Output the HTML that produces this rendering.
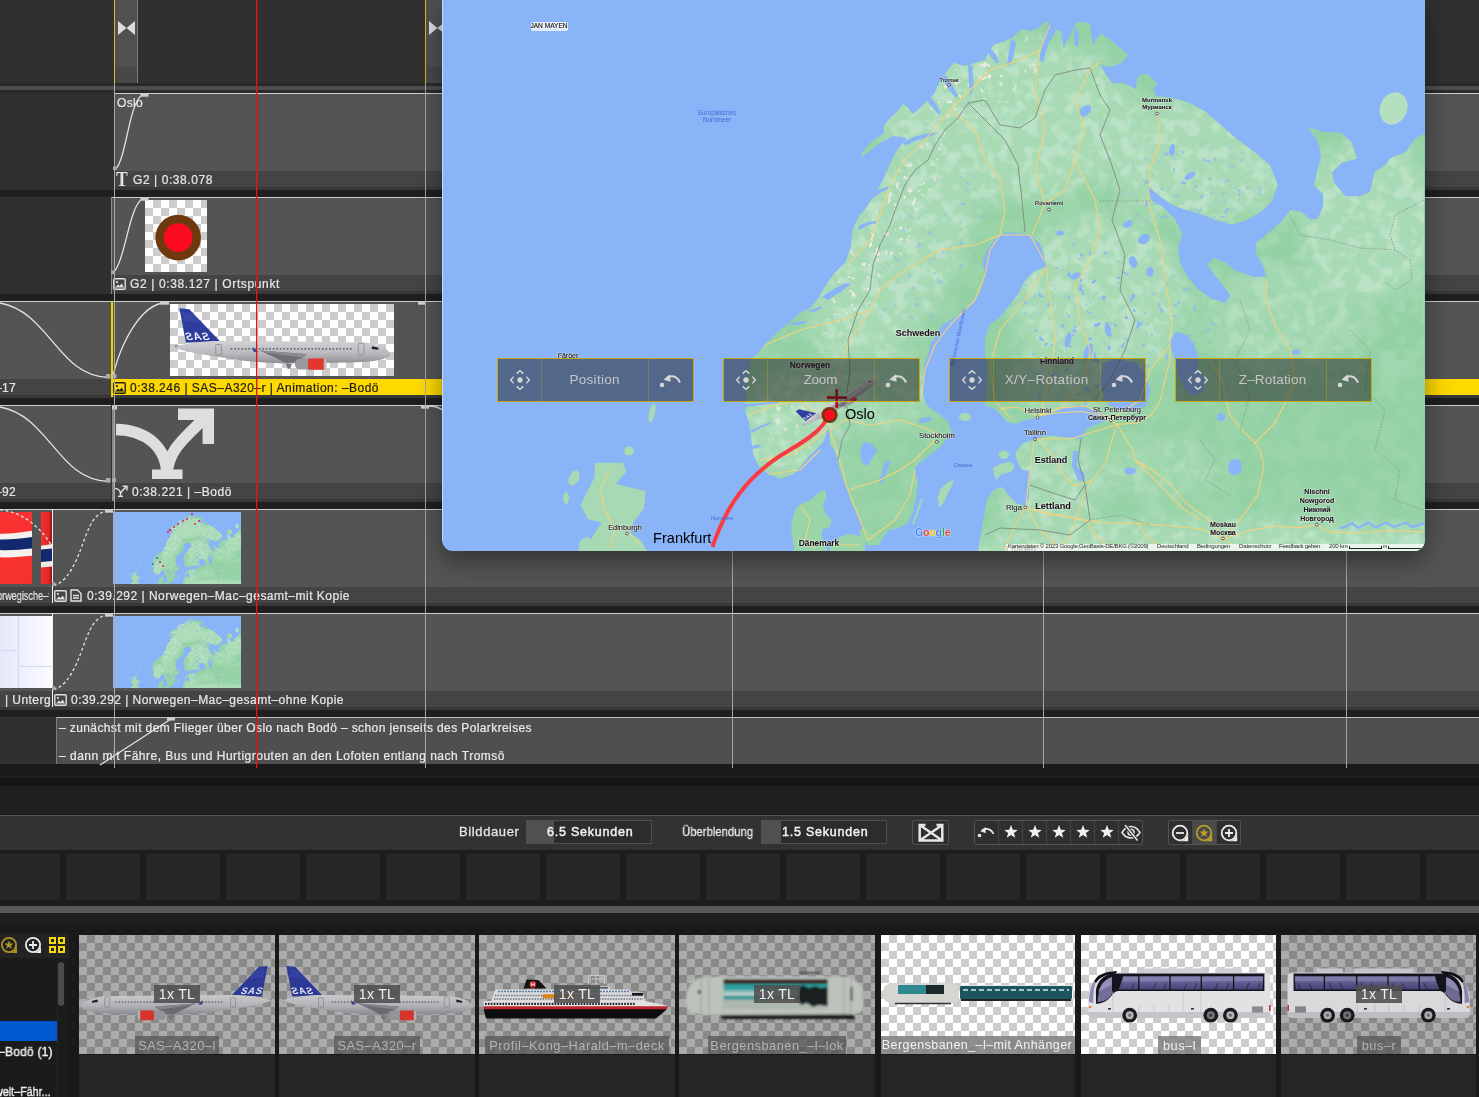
<!DOCTYPE html>
<html><head><meta charset="utf-8">
<style>
*{box-sizing:border-box;margin:0;padding:0}
html,body{width:1479px;height:1097px;overflow:hidden;background:#303030;font-family:"Liberation Sans",sans-serif;}
#root{position:absolute;left:0;top:0;width:1479px;height:1097px;overflow:hidden;background:#303030}
.abs{position:absolute}
.clip{position:absolute;background:#545454;border-top:1px solid #c8c8c8}
.lab{position:absolute;background:#444;height:17px}
.gapd{position:absolute;left:0;width:1479px;background:#232323}
.txt{position:absolute;color:#e4e4e4;font-size:12px;white-space:nowrap;letter-spacing:0.55px;line-height:14px;-webkit-text-stroke:.22px currentColor;will-change:transform}
.vline{position:absolute;top:0;width:1px;height:768px;background:#a4a4a4}
.chk{background-color:#fff;background-image:linear-gradient(45deg,#ccc 25%,transparent 25%,transparent 75%,#ccc 75%),linear-gradient(45deg,#ccc 25%,transparent 25%,transparent 75%,#ccc 75%);background-size:16px 16px;background-position:0 0,8px 8px}
.chkd{background-color:#b4b4b4;background-image:linear-gradient(45deg,#8f8f8f 25%,transparent 25%,transparent 75%,#8f8f8f 75%),linear-gradient(45deg,#8f8f8f 25%,transparent 25%,transparent 75%,#8f8f8f 75%);background-size:16px 16px;background-position:0 0,8px 8px}
#root div:not(:empty){will-change:transform}
</style></head><body><div id="root">
<!-- top ruler row -->
<div class="abs" style="left:0;top:0;width:1479px;height:84px;background:#303030"></div>
<div class="abs" style="left:114px;top:0;width:24px;height:83px;background:#505050;border-right:1px solid #7a7a7a"></div>
<div class="abs" style="left:114px;top:67px;width:23px;height:16px;background:#484848"></div>
<div class="abs" style="left:114px;top:0;width:1px;height:83px;background:#d8b92a"></div>
<div class="abs" style="left:425px;top:0;width:1px;height:83px;background:#d8b92a"></div>
<div class="abs" style="left:426px;top:0;width:16px;height:83px;background:#505050"></div>
<div class="abs" style="left:426px;top:67px;width:16px;height:16px;background:#484848"></div>
<svg class="abs" style="left:118px;top:21px" width="17" height="14" viewBox="0 0 17 14"><path d="M0 0 L8.5 7 L0 14 Z M17 0 L8.5 7 L17 14 Z" fill="#dcdcdc"/></svg>
<svg class="abs" style="left:429px;top:21px" width="17" height="14" viewBox="0 0 17 14"><path d="M0 0 L8.5 7 L0 14 Z M17 0 L8.5 7 L17 14 Z" fill="#dcdcdc"/></svg>
<div class="abs" style="left:0;top:83px;width:1479px;height:3px;background:#2a2a2a"></div>
<div class="abs" style="left:0;top:86px;width:1479px;height:4px;background:#4e4e4e"></div>
<div class="abs" style="left:0;top:90px;width:1479px;height:3px;background:#2a2a2a"></div>

<div class="abs" style="left:114px;top:93px;width:1365px;height:78px;background:#545454;border-top:1px solid #cfcfcf;"></div>
<div class="abs" style="left:114px;top:171px;width:1365px;height:16px;background:#444;"></div>
<div class="abs" style="left:114px;top:187px;width:1365px;height:3px;background:#383838;"></div>
<div class="abs" style="left:0px;top:190px;width:1479px;height:7px;background:#1f1f1f;"></div>
<div class="abs" style="left:111px;top:197px;width:1368px;height:78px;background:#545454;border-top:1px solid #cfcfcf;"></div>
<div class="abs" style="left:111px;top:275px;width:1368px;height:16px;background:#444;"></div>
<div class="abs" style="left:111px;top:291px;width:1368px;height:3px;background:#383838;"></div>
<div class="abs" style="left:0px;top:294px;width:1479px;height:7px;background:#1f1f1f;"></div>
<div class="abs" style="left:0px;top:301px;width:111px;height:78px;background:#545454;border-top:1px solid #cfcfcf;"></div>
<div class="abs" style="left:0px;top:379px;width:111px;height:16px;background:#444;"></div>
<div class="abs" style="left:0px;top:395px;width:111px;height:3px;background:#383838;"></div>
<div class="abs" style="left:111px;top:301px;width:1368px;height:78px;background:#545454;border-top:1px solid #cfcfcf;"></div>
<div class="abs" style="left:111px;top:379px;width:1368px;height:16px;background:#fdd900;"></div>
<div class="abs" style="left:111px;top:395px;width:1368px;height:3px;background:#383838;"></div>
<div class="abs" style="left:0px;top:398px;width:1479px;height:7px;background:#1f1f1f;"></div>
<div class="abs" style="left:0px;top:405px;width:111px;height:78px;background:#545454;border-top:1px solid #cfcfcf;"></div>
<div class="abs" style="left:0px;top:483px;width:111px;height:16px;background:#444;"></div>
<div class="abs" style="left:0px;top:499px;width:111px;height:3px;background:#383838;"></div>
<div class="abs" style="left:112px;top:405px;width:1367px;height:78px;background:#545454;border-top:1px solid #cfcfcf;"></div>
<div class="abs" style="left:112px;top:483px;width:1367px;height:16px;background:#444;"></div>
<div class="abs" style="left:112px;top:499px;width:1367px;height:3px;background:#383838;"></div>
<div class="abs" style="left:0px;top:502px;width:1479px;height:7px;background:#1f1f1f;"></div>
<div class="abs" style="left:0px;top:509px;width:52px;height:78px;background:#545454;border-top:1px solid #cfcfcf;"></div>
<div class="abs" style="left:0px;top:587px;width:52px;height:16px;background:#444;"></div>
<div class="abs" style="left:0px;top:603px;width:52px;height:3px;background:#383838;"></div>
<div class="abs" style="left:52px;top:509px;width:1427px;height:78px;background:#545454;border-top:1px solid #cfcfcf;"></div>
<div class="abs" style="left:52px;top:587px;width:1427px;height:16px;background:#444;"></div>
<div class="abs" style="left:52px;top:603px;width:1427px;height:3px;background:#383838;"></div>
<div class="abs" style="left:0px;top:606px;width:1479px;height:7px;background:#1f1f1f;"></div>
<div class="abs" style="left:0px;top:613px;width:52px;height:78px;background:#545454;border-top:1px solid #cfcfcf;"></div>
<div class="abs" style="left:0px;top:691px;width:52px;height:16px;background:#444;"></div>
<div class="abs" style="left:0px;top:707px;width:52px;height:3px;background:#383838;"></div>
<div class="abs" style="left:52px;top:613px;width:1427px;height:78px;background:#545454;border-top:1px solid #cfcfcf;"></div>
<div class="abs" style="left:52px;top:691px;width:1427px;height:16px;background:#444;"></div>
<div class="abs" style="left:52px;top:707px;width:1427px;height:3px;background:#383838;"></div>
<div class="abs" style="left:0px;top:710px;width:1479px;height:7px;background:#1f1f1f;"></div>
<div class="abs" style="left:56px;top:717px;width:1423px;height:47px;background:#4f4f4f;border-left:1px solid #7d7d7d;border-top:1px solid #bdbdbd;"></div>
<div class="abs" style="left:0px;top:764px;width:1479px;height:11.5px;background:#1a1a1a;"></div>
<div class="abs" style="left:0px;top:775.5px;width:1479px;height:2.5px;background:#1f1f1f;"></div>
<div class="abs" style="left:0px;top:778px;width:1479px;height:7.5px;background:#151515;"></div>
<div class="abs" style="left:0px;top:785.5px;width:1479px;height:29.5px;background:#1f1f1f;"></div>
<div class="abs" style="left:111px;top:197px;width:1px;height:97px;background:#8a8a8a;"></div>
<div class="abs" style="left:111px;top:301px;width:2px;height:96px;background:#f2d000;"></div>
<div class="abs" style="left:112px;top:405px;width:2px;height:96px;background:#8a8a8a;"></div>
<div class="abs" style="left:52px;top:509px;width:1px;height:94px;background:#f4f4f4;"></div>
<div class="abs" style="left:52px;top:613px;width:1px;height:94px;background:#f4f4f4;"></div>
<div class="abs chk" style="left:145px;top:200px;width:62px;height:72px"></div>
<svg class="abs" style="left:145px;top:200px" width="62" height="72" viewBox="145 200 62 72"><circle cx="178.2" cy="237.6" r="22.8" fill="#70390d"/><circle cx="178.2" cy="237.6" r="14.3" fill="#fb0a20"/></svg>
<div class="abs chk" style="left:170px;top:304px;width:224px;height:72px;overflow:hidden"><svg class="abs" style="left:1px;top:-31px;transform:scaleX(-1)" width="222" height="135"><use href="#plane"/></svg></div>
<svg class="abs" style="left:112px;top:405px" width="110" height="80" viewBox="112 405 110 80"><g fill="none" stroke="#dedede" stroke-width="11.5"><path d="M116 429.5 C146 430 167 447 167 476"/><path d="M167 476 C167 452 182 440 206 417"/><path d="M178 414.3 H208.3 V444" stroke-linejoin="miter"/></g><rect x="152" y="469.5" width="30.5" height="9.5" fill="#dedede"/></svg>
<svg class="abs" style="left:0;top:512px" width="32" height="72" viewBox="0 0 32 72"><defs><linearGradient id="flg" x1="0" y1="0" x2="1" y2="1"><stop offset="0" stop-color="#fb3231"/><stop offset="1" stop-color="#f33230"/></linearGradient></defs><rect width="32" height="72" fill="url(#flg)"/><path d="M0 21.7 C10 22 22 20.5 32 18.8 L32 43.7 C22 44.5 10 46 0 45.2Z" fill="#f6f1ec"/><path d="M0 27.4 C10 27.6 22 26.5 32 25 L32 36.5 C22 37.5 10 38.6 0 38Z" fill="#112a6e"/></svg>
<svg class="abs" style="left:41px;top:512px" width="11" height="72" viewBox="0 0 11 72"><defs><linearGradient id="flg2" x1="0" y1="0" x2="1" y2="0"><stop offset="0" stop-color="#f33030"/><stop offset=".7" stop-color="#e02828"/><stop offset="1" stop-color="#8e1417"/></linearGradient></defs><rect width="11" height="72" fill="url(#flg2)"/><path d="M0 33.7 L11 32 V54.5 L0 55.5Z" fill="#f1ebe6"/><path d="M0 37.5 L11 36.5 V49 L0 50Z" fill="#112a6e"/></svg>
<div class="abs" style="left:0;top:616px;width:52px;height:72px;background:linear-gradient(90deg,#e4e8fa,#fbfbff)"></div>
<div class="abs" style="left:18px;top:616px;width:1px;height:72px;background:#d5d9ef;"></div>
<div class="abs" style="left:0px;top:650px;width:18px;height:1px;background:#d5d9ef;"></div>
<div class="abs" style="left:18px;top:666px;width:34px;height:1px;background:#d5d9ef;"></div>
<svg class="abs" style="left:113px;top:512px;background:#8ab4f8" width="128" height="72" viewBox="442 0 982 550" preserveAspectRatio="none"><use href="#landall"/></svg>
<svg class="abs" style="left:113px;top:616px;background:#8ab4f8" width="128" height="72" viewBox="442 0 982 550" preserveAspectRatio="none"><use href="#landall"/></svg>
<svg class="abs" style="left:113px;top:512px" width="128" height="72" viewBox="113 512 128 72"><g fill="#d8204a"><circle cx="192" cy="514" r="1"/><circle cx="187" cy="519" r="1"/><circle cx="183" cy="521" r="1"/><circle cx="178" cy="524" r="1"/><circle cx="174" cy="527" r="1"/><circle cx="170" cy="530" r="1.2"/><circle cx="168" cy="532" r="1"/><circle cx="195" cy="524" r="1"/><circle cx="199" cy="521" r="1"/><circle cx="163" cy="566" r="1"/><circle cx="160" cy="562" r="1"/></g><g fill="#2b7fb8"><circle cx="157" cy="558" r="1"/><circle cx="153" cy="564" r="1"/></g></svg>
<svg class="abs" style="left:0;top:90px;width:450px;height:680px" viewBox="0 90 450 680"><path d="M115.5 169 C126 160 129 104 141.5 95.5" fill="none" stroke="#e2e2e2" stroke-width="1.3"/><path d="M113 273 C125 262 129 208 141.5 199.5" fill="none" stroke="#e2e2e2" stroke-width="1.3"/><path d="M0 303 C50 312 58 377 109 377.5" fill="none" stroke="#e2e2e2" stroke-width="1.3"/><path d="M0 407 C50 416 58 481 109 481.5" fill="none" stroke="#e2e2e2" stroke-width="1.3"/><path d="M112.5 378 C120 345 140 304 166 302.5" fill="none" stroke="#e2e2e2" stroke-width="1.3"/><path d="M429 406 C436 406 440 408 444 411" fill="none" stroke="#e2e2e2" stroke-width="1.3"/><path d="M0 509.8 C22 512 40 526 52.5 547" fill="none" stroke="#e2e2e2" stroke-width="1.3" stroke-dasharray="3 2.5"/><path d="M53.6 585.4 C63 583 70 574 76.6 559.5 C83 545 88 526 95 518 C100 513 104 511 108 510" fill="none" stroke="#e2e2e2" stroke-width="1.3" stroke-dasharray="3 2.5"/><path d="M53.6 689.4 C63 687 70 678 76.6 663.5 C83 649 88 630 95 622 C100 617 104 615 108 614" fill="none" stroke="#e2e2e2" stroke-width="1.3" stroke-dasharray="3 2.5"/><path d="M100 765 L171 719" fill="none" stroke="#e2e2e2" stroke-width="1.3" stroke-width="1.6"/><g fill="#cfcfcf"><rect x="140.5" y="93.5" width="8" height="3.2"/><rect x="140.5" y="197.5" width="8" height="3.2"/><rect x="160" y="301.5" width="9" height="3.2"/><rect x="418" y="301.5" width="8" height="3.2"/><rect x="421" y="405.5" width="8" height="3.2"/><rect x="112" y="405.5" width="5" height="4"/><rect x="105" y="509.5" width="8" height="3.2"/><rect x="105" y="613.5" width="8" height="3.2"/><rect x="167" y="717.3" width="8" height="3.2"/><rect x="106" y="374" width="4.5" height="4.5" fill="#aaa"/><rect x="106" y="478" width="4.5" height="4.5" fill="#aaa"/><rect x="113" y="166.5" width="3.5" height="3.5" fill="#aaa"/><rect x="111" y="270.5" width="3.5" height="3.5" fill="#aaa"/><rect x="112.5" y="374" width="4" height="4" fill="#aaa"/><rect x="112" y="478" width="4" height="4" fill="#aaa"/><rect x="52" y="582.5" width="3.5" height="3.5" fill="#aaa"/><rect x="52" y="686.5" width="3.5" height="3.5" fill="#aaa"/></g></svg>
<svg class="abs" style="left:113px;top:277.5px" width="13" height="12" viewBox="0 0 13 12"><rect x=".8" y=".8" width="11.4" height="10.4" rx="1" fill="none" stroke="#e0e0e0" stroke-width="1.4"/><circle cx="4" cy="4" r="1.1" fill="#e0e0e0"/><path d="M2 9.5 L5 6.5 L6.7 8 L8.7 5.6 L11 9.5Z" fill="#e0e0e0"/></svg>
<svg class="abs" style="left:113px;top:381.5px" width="13" height="12" viewBox="0 0 13 12"><rect x=".8" y=".8" width="11.4" height="10.4" rx="1" fill="none" stroke="#222" stroke-width="1.4"/><circle cx="4" cy="4" r="1.1" fill="#222"/><path d="M2 9.5 L5 6.5 L6.7 8 L8.7 5.6 L11 9.5Z" fill="#222"/></svg>
<svg class="abs" style="left:54px;top:589.5px" width="13" height="12" viewBox="0 0 13 12"><rect x=".8" y=".8" width="11.4" height="10.4" rx="1" fill="none" stroke="#e0e0e0" stroke-width="1.4"/><circle cx="4" cy="4" r="1.1" fill="#e0e0e0"/><path d="M2 9.5 L5 6.5 L6.7 8 L8.7 5.6 L11 9.5Z" fill="#e0e0e0"/></svg>
<svg class="abs" style="left:54px;top:693.5px" width="13" height="12" viewBox="0 0 13 12"><rect x=".8" y=".8" width="11.4" height="10.4" rx="1" fill="none" stroke="#e0e0e0" stroke-width="1.4"/><circle cx="4" cy="4" r="1.1" fill="#e0e0e0"/><path d="M2 9.5 L5 6.5 L6.7 8 L8.7 5.6 L11 9.5Z" fill="#e0e0e0"/></svg>
<svg class="abs" style="left:70px;top:589px" width="12" height="13" viewBox="0 0 12 13"><path d="M1 1 H7.5 L11 4.5 V12 H1Z" fill="none" stroke="#e0e0e0" stroke-width="1.4"/><path d="M3 6.5 H9 M3 9 H9" stroke="#e0e0e0" stroke-width="1.3"/></svg>
<div class="abs" style="left:116px;top:169px;font-family:'Liberation Serif',serif;font-size:20px;font-weight:bold;line-height:20px;color:#e6e6e6;transform:scaleX(.88);transform-origin:0 0">T</div>
<svg class="abs" style="left:114px;top:485px" width="15" height="13" viewBox="0 0 15 13"><g fill="none" stroke="#e0e0e0" stroke-width="1.4"><path d="M1 3.5 C4 3.5 6.5 5.5 6.5 9"/><path d="M6.5 12 V9 C6.5 6.5 9 5 12.5 1.8"/><path d="M8.6 1.3 H13 V5.6"/></g><path d="M4 11.3 H9" stroke="#e0e0e0" stroke-width="1.4"/></svg>
<div class="txt" style="left:117px;top:96px;color:#e6e6e6;font-size:12px;font-weight:normal;letter-spacing:0.328px">Oslo</div>
<div class="txt" style="left:133px;top:173px;color:#e6e6e6;font-size:12px;font-weight:normal;letter-spacing:0.576px">G2 | 0:38.078</div>
<div class="txt" style="left:130px;top:277px;color:#e6e6e6;font-size:12px;font-weight:normal;letter-spacing:0.627px">G2 | 0:38.127 | Ortspunkt</div>
<div class="txt" style="left:130px;top:381px;color:#1c1c1c;font-size:12px;font-weight:normal;letter-spacing:0.482px">0:38.246 | SAS–A320–r | Animation: –Bodö</div>
<div class="txt" style="left:132px;top:485px;color:#e6e6e6;font-size:12px;font-weight:normal;letter-spacing:0.550px">0:38.221 | –Bodö</div>
<div class="txt" style="left:87px;top:589px;color:#e6e6e6;font-size:12px;font-weight:normal;letter-spacing:0.493px">0:39.292 | Norwegen–Mac–gesamt–mit Kopie</div>
<div class="txt" style="left:71px;top:693px;color:#e6e6e6;font-size:12px;font-weight:normal;letter-spacing:0.464px">0:39.292 | Norwegen–Mac–gesamt–ohne Kopie</div>
<div class="txt" style="left:59px;top:721px;color:#e9e9e9;font-size:12px;font-weight:normal;letter-spacing:0.393px">– zunächst mit dem Flieger über Oslo nach Bodö – schon jenseits des Polarkreises</div>
<div class="txt" style="left:59px;top:749px;color:#e9e9e9;font-size:12px;font-weight:normal;letter-spacing:0.499px">– dann mit Fähre, Bus und Hurtigrouten an den Lofoten entlang nach Tromsö</div>
<div class="txt" style="left:-5px;top:381px;color:#e6e6e6;font-size:12px;font-weight:normal;letter-spacing:0.323px">–17</div>
<div class="txt" style="left:-5px;top:485px;color:#e6e6e6;font-size:12px;font-weight:normal;letter-spacing:0.323px">–92</div>
<div class="txt" style="left:5px;top:693px;color:#e6e6e6;font-size:12px;font-weight:normal;letter-spacing:0.441px">| Unterg</div>
<div class="txt" style="left:-3px;top:589px;width:68px;overflow:hidden;letter-spacing:0;transform:scaleX(.76);transform-origin:0 50%">orwegische–f</div>
<div class="vline" style="left:114px;top:83px;height:685px;background:#aaa"></div>
<div class="vline" style="left:425px;top:83px;height:685px"></div>
<div class="vline" style="left:732px"></div>
<div class="vline" style="left:1043px"></div>
<div class="vline" style="left:1346px"></div>
<div class="abs" style="left:256px;top:0;width:1px;height:768px;background:#e51212;box-shadow:1px 0 0 rgba(229,18,18,.35)"></div>

<div class="abs" style="left:442px;top:0;width:982.6px;height:551px;border-radius:0 0 11px 11px;overflow:hidden;background:#8ab4f8;box-shadow:0 9px 26px 0 rgba(0,0,0,.42)"><div class="abs" style="left:0;top:0;width:1px;height:540px;background:rgba(255,255,255,.5);z-index:5"></div>
<svg class="abs" style="left:0;top:0" width="983" height="551" viewBox="442 0 983 551">
<defs><filter id="bl" x="-20%" y="-20%" width="140%" height="140%"><feGaussianBlur stdDeviation="9"/></filter><filter id="nzL" color-interpolation-filters="sRGB" x="0" y="0" width="100%" height="100%"><feTurbulence type="fractalNoise" baseFrequency="0.075" numOctaves="2" seed="7"/><feColorMatrix values="0 0 0 0 .733  0 0 0 0 .886  0 0 0 0 .776  5 0 0 0 -2.3"/></filter><filter id="nzM" color-interpolation-filters="sRGB" x="0" y="0" width="100%" height="100%"><feTurbulence type="fractalNoise" baseFrequency="0.05" numOctaves="2" seed="21"/><feColorMatrix values="0 0 0 0 .659  0 0 0 0 .855  0 0 0 0 .71  0 6 0 0 -2.6"/></filter><filter id="nzW" color-interpolation-filters="sRGB" x="0" y="0" width="100%" height="100%"><feTurbulence type="fractalNoise" baseFrequency="0.16" numOctaves="2" seed="4"/><feColorMatrix values="0 0 0 0 .95  0 0 0 0 .92  0 0 0 0 .88  0 0 16 0 -10.6"/></filter><filter id="nzB" color-interpolation-filters="sRGB" x="0" y="0" width="100%" height="100%"><feTurbulence type="fractalNoise" baseFrequency="0.14" numOctaves="2" seed="11"/><feColorMatrix values="0 0 0 0 .541  0 0 0 0 .706  0 0 0 0 .973  0 16 0 0 -10.9"/></filter><mask id="mN"><g filter="url(#bl)" fill="#fff"><ellipse cx="895" cy="255" rx="60" ry="130" transform="rotate(28 895 255)"/><ellipse cx="1010" cy="120" rx="130" ry="80"/><ellipse cx="1200" cy="160" rx="95" ry="60"/><ellipse cx="1100" cy="300" rx="85" ry="85"/><ellipse cx="790" cy="425" rx="50" ry="55"/><ellipse cx="1370" cy="220" rx="70" ry="80"/><ellipse cx="1280" cy="320" rx="80" ry="50" fill="#999"/><ellipse cx="880" cy="390" rx="50" ry="40" fill="#999"/><ellipse cx="1060" cy="380" rx="50" ry="35" fill="#aaa"/><ellipse cx="1230" cy="552" rx="280" ry="32" fill="#fff"/><ellipse cx="1050" cy="495" rx="50" ry="60" fill="#ccc"/><ellipse cx="1160" cy="470" rx="60" ry="35" fill="#777"/></g></mask><mask id="mS"><g filter="url(#bl)" fill="#fff"><rect x="442" y="0" width="982" height="552" fill="#555"/><ellipse cx="1330" cy="300" rx="120" ry="90" fill="#aaa"/></g></mask><mask id="mW"><g filter="url(#bl)" fill="#fff"><ellipse cx="885" cy="235" rx="22" ry="120" transform="rotate(30 885 235)"/><ellipse cx="985" cy="80" rx="70" ry="25" transform="rotate(-25 985 80)"/><ellipse cx="790" cy="420" rx="25" ry="35" fill="#bbb"/></g></mask><mask id="mB"><g filter="url(#bl)" fill="#fff"><ellipse cx="1085" cy="330" rx="70" ry="85"/><ellipse cx="1190" cy="190" rx="70" ry="50" fill="#aaa"/><ellipse cx="1180" cy="330" rx="40" ry="50" fill="#aaa"/><ellipse cx="930" cy="250" rx="40" ry="90" transform="rotate(28 930 250)" fill="#888"/></g></mask><clipPath id="landclip"><polygon points="978.0,552.0 981.0,534.0 983.5,518.5 987.0,500.0 993.5,490.0 1002.0,487.0 1008.7,495.0 1015.5,503.0 1025.0,506.6 1029.0,498.0 1029.0,485.0 1030.7,471.0 1022.0,469.4 1017.0,461.0 1015.5,452.5 1022.0,444.0 1030.7,440.7 1046.0,435.6 1063.0,437.0 1081.4,439.0 1086.5,429.0 1096.6,424.0 1106.0,421.0 1108.0,416.0 1096.6,410.0 1084.8,407.0 1079.7,405.0 1062.8,408.6 1046.0,415.0 1037.5,418.0 1025.6,420.0 1015.5,423.8 1007.0,422.0 1000.0,413.7 993.5,408.6 985.0,405.0 986.0,395.0 987.0,365.0 985.0,354.0 985.0,339.0 989.4,325.0 1000.6,316.5 1009.5,305.0 1018.4,294.0 1025.0,280.7 1034.0,271.8 1046.0,267.0 1045.0,258.4 1040.7,245.0 1031.8,236.0 1018.4,232.7 1005.0,232.7 996.0,238.0 987.0,249.5 982.7,263.0 985.0,276.0 980.5,292.0 969.3,305.0 956.0,316.5 942.5,325.0 931.4,343.0 924.7,365.0 922.3,382.0 923.0,395.0 926.2,405.0 938.0,413.6 948.2,422.0 951.6,432.0 941.4,445.7 931.3,454.0 919.5,462.6 914.4,469.4 917.8,483.0 916.0,496.4 912.7,513.0 907.6,523.5 897.5,528.5 889.0,530.0 882.0,538.7 878.9,545.0 868.7,545.4 862.0,538.7 858.6,532.0 863.7,526.8 860.0,520.0 855.0,510.0 850.0,499.8 848.5,491.0 843.4,481.0 840.0,471.0 838.0,461.0 835.0,450.8 829.9,444.0 829.9,434.0 828.0,425.4 826.5,434.0 823.0,442.0 816.3,449.0 807.9,457.5 801.0,466.0 792.7,474.4 780.9,478.7 769.0,474.4 758.9,466.0 753.8,456.0 752.0,444.0 750.4,432.0 748.7,420.4 745.4,412.0 745.4,401.8 747.0,380.0 751.0,358.6 756.4,355.0 765.5,344.0 776.5,333.0 787.4,324.0 800.0,313.0 811.0,307.6 818.4,298.0 825.7,285.7 834.8,273.0 845.7,262.0 851.0,247.0 853.0,229.0 860.0,214.6 864.8,210.0 873.8,196.5 882.7,181.0 889.4,165.0 896.0,152.0 903.0,143.0 906.8,138.0 900.0,136.5 893.0,136.0 880.0,143.0 868.0,152.0 861.0,158.0 862.0,153.0 872.0,141.0 884.0,133.5 884.0,126.0 890.0,118.0 897.0,112.0 903.0,104.0 908.0,108.0 912.0,114.0 918.0,110.0 923.0,105.0 934.0,94.0 940.0,82.0 945.0,74.0 954.0,62.5 962.0,66.0 970.0,65.0 978.0,62.0 985.0,60.0 990.0,50.0 994.0,44.7 1003.0,42.0 1012.0,38.0 1018.0,32.0 1023.0,29.0 1030.0,31.0 1037.0,29.0 1044.0,23.0 1050.0,20.0 1051.0,33.5 1056.0,30.0 1061.0,31.0 1063.5,49.0 1070.0,35.0 1077.0,22.0 1084.0,22.0 1090.0,24.6 1092.6,44.7 1097.0,38.0 1101.5,33.5 1113.4,42.4 1128.0,54.7 1122.0,62.5 1111.0,67.0 1100.0,65.0 1106.0,75.0 1113.0,84.0 1122.0,82.6 1135.7,89.0 1138.0,76.0 1147.0,73.7 1157.0,82.6 1153.6,89.3 1155.8,96.0 1173.7,98.2 1189.3,102.7 1205.0,111.6 1220.6,125.0 1236.0,138.4 1254.0,151.8 1269.7,165.0 1277.5,185.0 1272.0,201.0 1260.7,212.0 1245.0,221.0 1231.7,224.4 1216.0,220.0 1200.5,214.0 1187.0,210.0 1173.7,205.4 1160.0,196.5 1147.0,185.0 1151.0,200.0 1162.5,206.7 1173.7,218.0 1182.6,233.5 1178.0,247.0 1180.0,262.5 1187.0,276.0 1198.0,289.0 1211.6,299.0 1225.0,302.7 1230.6,296.0 1222.8,284.8 1211.6,271.0 1207.0,264.7 1213.9,258.0 1225.0,262.5 1236.0,271.0 1254.0,277.0 1266.0,277.0 1264.0,267.0 1256.0,253.6 1256.0,243.5 1267.5,233.5 1280.8,222.0 1290.9,210.0 1301.0,212.0 1311.0,220.0 1317.7,219.0 1323.0,206.7 1323.0,194.0 1314.0,185.0 1316.6,174.0 1321.0,156.0 1318.8,143.0 1307.6,127.0 1323.0,131.7 1341.0,132.8 1352.0,143.0 1356.8,158.5 1341.0,163.0 1332.0,172.0 1334.0,183.0 1345.6,196.5 1359.0,196.5 1370.0,192.0 1374.6,172.0 1385.8,165.0 1390.0,158.5 1406.0,151.8 1414.8,138.4 1426.0,133.0 1426.0,552.0"/></clipPath></defs>
<g id="landall"><polygon points="978.0,552.0 981.0,534.0 983.5,518.5 987.0,500.0 993.5,490.0 1002.0,487.0 1008.7,495.0 1015.5,503.0 1025.0,506.6 1029.0,498.0 1029.0,485.0 1030.7,471.0 1022.0,469.4 1017.0,461.0 1015.5,452.5 1022.0,444.0 1030.7,440.7 1046.0,435.6 1063.0,437.0 1081.4,439.0 1086.5,429.0 1096.6,424.0 1106.0,421.0 1108.0,416.0 1096.6,410.0 1084.8,407.0 1079.7,405.0 1062.8,408.6 1046.0,415.0 1037.5,418.0 1025.6,420.0 1015.5,423.8 1007.0,422.0 1000.0,413.7 993.5,408.6 985.0,405.0 986.0,395.0 987.0,365.0 985.0,354.0 985.0,339.0 989.4,325.0 1000.6,316.5 1009.5,305.0 1018.4,294.0 1025.0,280.7 1034.0,271.8 1046.0,267.0 1045.0,258.4 1040.7,245.0 1031.8,236.0 1018.4,232.7 1005.0,232.7 996.0,238.0 987.0,249.5 982.7,263.0 985.0,276.0 980.5,292.0 969.3,305.0 956.0,316.5 942.5,325.0 931.4,343.0 924.7,365.0 922.3,382.0 923.0,395.0 926.2,405.0 938.0,413.6 948.2,422.0 951.6,432.0 941.4,445.7 931.3,454.0 919.5,462.6 914.4,469.4 917.8,483.0 916.0,496.4 912.7,513.0 907.6,523.5 897.5,528.5 889.0,530.0 882.0,538.7 878.9,545.0 868.7,545.4 862.0,538.7 858.6,532.0 863.7,526.8 860.0,520.0 855.0,510.0 850.0,499.8 848.5,491.0 843.4,481.0 840.0,471.0 838.0,461.0 835.0,450.8 829.9,444.0 829.9,434.0 828.0,425.4 826.5,434.0 823.0,442.0 816.3,449.0 807.9,457.5 801.0,466.0 792.7,474.4 780.9,478.7 769.0,474.4 758.9,466.0 753.8,456.0 752.0,444.0 750.4,432.0 748.7,420.4 745.4,412.0 745.4,401.8 747.0,380.0 751.0,358.6 756.4,355.0 765.5,344.0 776.5,333.0 787.4,324.0 800.0,313.0 811.0,307.6 818.4,298.0 825.7,285.7 834.8,273.0 845.7,262.0 851.0,247.0 853.0,229.0 860.0,214.6 864.8,210.0 873.8,196.5 882.7,181.0 889.4,165.0 896.0,152.0 903.0,143.0 906.8,138.0 900.0,136.5 893.0,136.0 880.0,143.0 868.0,152.0 861.0,158.0 862.0,153.0 872.0,141.0 884.0,133.5 884.0,126.0 890.0,118.0 897.0,112.0 903.0,104.0 908.0,108.0 912.0,114.0 918.0,110.0 923.0,105.0 934.0,94.0 940.0,82.0 945.0,74.0 954.0,62.5 962.0,66.0 970.0,65.0 978.0,62.0 985.0,60.0 990.0,50.0 994.0,44.7 1003.0,42.0 1012.0,38.0 1018.0,32.0 1023.0,29.0 1030.0,31.0 1037.0,29.0 1044.0,23.0 1050.0,20.0 1051.0,33.5 1056.0,30.0 1061.0,31.0 1063.5,49.0 1070.0,35.0 1077.0,22.0 1084.0,22.0 1090.0,24.6 1092.6,44.7 1097.0,38.0 1101.5,33.5 1113.4,42.4 1128.0,54.7 1122.0,62.5 1111.0,67.0 1100.0,65.0 1106.0,75.0 1113.0,84.0 1122.0,82.6 1135.7,89.0 1138.0,76.0 1147.0,73.7 1157.0,82.6 1153.6,89.3 1155.8,96.0 1173.7,98.2 1189.3,102.7 1205.0,111.6 1220.6,125.0 1236.0,138.4 1254.0,151.8 1269.7,165.0 1277.5,185.0 1272.0,201.0 1260.7,212.0 1245.0,221.0 1231.7,224.4 1216.0,220.0 1200.5,214.0 1187.0,210.0 1173.7,205.4 1160.0,196.5 1147.0,185.0 1151.0,200.0 1162.5,206.7 1173.7,218.0 1182.6,233.5 1178.0,247.0 1180.0,262.5 1187.0,276.0 1198.0,289.0 1211.6,299.0 1225.0,302.7 1230.6,296.0 1222.8,284.8 1211.6,271.0 1207.0,264.7 1213.9,258.0 1225.0,262.5 1236.0,271.0 1254.0,277.0 1266.0,277.0 1264.0,267.0 1256.0,253.6 1256.0,243.5 1267.5,233.5 1280.8,222.0 1290.9,210.0 1301.0,212.0 1311.0,220.0 1317.7,219.0 1323.0,206.7 1323.0,194.0 1314.0,185.0 1316.6,174.0 1321.0,156.0 1318.8,143.0 1307.6,127.0 1323.0,131.7 1341.0,132.8 1352.0,143.0 1356.8,158.5 1341.0,163.0 1332.0,172.0 1334.0,183.0 1345.6,196.5 1359.0,196.5 1370.0,192.0 1374.6,172.0 1385.8,165.0 1390.0,158.5 1406.0,151.8 1414.8,138.4 1426.0,133.0 1426.0,552.0" fill="#94d2a5"/>
<g clip-path="url(#landclip)"><rect x="442" y="0" width="982" height="552" fill="#a8dab5" mask="url(#mN)"/><g mask="url(#mS)"><rect x="442" y="0" width="982" height="552" filter="url(#nzM)"/></g><g mask="url(#mN)"><rect x="442" y="0" width="982" height="552" filter="url(#nzL)"/></g><g mask="url(#mW)"><rect x="442" y="0" width="982" height="552" filter="url(#nzW)"/></g><g mask="url(#mB)"><rect x="442" y="0" width="982" height="552" filter="url(#nzB)"/></g></g>
<polygon points="824.8,489.7 826.5,496.4 823.0,505.0 824.8,513.0 831.6,520.0 830.0,526.8 823.0,528.5 821.4,535.0 824.8,543.7 828.0,552.0 794.4,552.0 792.7,540.0 791.0,528.5 792.7,518.4 796.0,508.0 802.8,503.0 811.0,499.8 818.0,493.0" fill="#9ad5aa"/>
<polygon points="838.0,538.0 848.0,534.0 860.0,536.0 866.0,542.0 864.0,552.0 840.0,552.0" fill="#9ad5aa"/>
<polygon points="830.0,543.0 838.0,542.0 842.0,552.0 830.0,552.0" fill="#9ad5aa"/>
<polygon points="594.7,462.8 622.8,462.8 626.4,471.6 615.8,484.0 630.0,487.5 645.7,491.0 644.0,508.6 633.4,522.6 630.0,533.0 640.4,540.0 647.5,552.0 578.0,552.0 580.0,541.0 587.0,536.5 591.0,539.0 594.7,533.0 601.7,522.6 587.7,519.0 580.6,505.0 587.7,491.0 594.7,477.0" fill="#a6d9b4"/>
<polygon points="953.8,480.4 947.9,482.0 940.0,489.7 937.8,498.0 939.4,508.0 944.5,501.6 947.9,493.0 952.0,486.0" fill="#a6d9b4"/>
<polygon points="993.0,468.0 1000.0,464.0 1010.0,462.0 1015.0,466.0 1011.0,472.0 1002.0,474.0 996.0,480.0 994.0,474.0" fill="#a6d9b4"/>
<polygon points="998.0,453.0 1004.0,450.0 1010.0,454.0 1006.0,459.0 1000.0,458.0" fill="#a6d9b4"/>
<polygon points="1169.0,343.0 1176.0,331.7 1184.8,334.0 1193.8,343.0 1198.0,356.0 1198.0,369.7 1205.0,378.6 1202.7,392.0 1193.8,396.5 1184.8,389.8 1178.0,374.0 1173.7,356.0" fill="#8ab4f8"/>
<polygon points="1103.0,363.0 1118.0,359.5 1135.0,362.0 1146.0,374.0 1150.0,392.0 1146.0,406.0 1132.0,412.0 1116.0,410.0 1105.0,400.0 1100.0,382.0" fill="#8ab4f8"/>
<polygon points="863.7,442.0 872.0,444.0 877.0,450.8 872.0,459.0 867.0,466.0 862.0,462.6 860.0,452.5" fill="#8ab4f8"/>
<path d="M1049 21 L1056 30 L1048 45 L1043 62 L1038.5 60 L1042 44 Z" fill="#8ab4f8"/>
<path d="M1011 39 L1016 42 L1013.5 56 L1010 66 L1007 64 Z" fill="#8ab4f8"/>
<path d="M968 65 L972.5 66 L973.5 85 L971 98 L969 84 Z" fill="#8ab4f8"/>
<path d="M945 74 L952 84 L958 96 L955 97.5 L948 88 L942 79 Z" fill="#8ab4f8"/>
<path d="M903 142 L915 136.5 L930 133 L938 133 L930 136.5 L916 140.5 L905 146 Z" fill="#8ab4f8"/>
<path d="M822 297 L832 290 L845 283 L851 284 L840 292.5 L828 300 Z" fill="#8ab4f8"/>
<path d="M745 404 L760 403 L778 401.5 L778.3 403 L760 405 L745 407 Z" fill="#8ab4f8"/>
<path d="M750 431 L760 426 L770 422.5 L770.6 424 L761 427.8 L751 433.5Z" fill="#8ab4f8"/>
<path d="M752 446 L760 444.5 L761 447 L753 449Z" fill="#8ab4f8"/>
<path d="M930 96 L936 104 L941 113 L938 114 L931 106 L926 99Z" fill="#8ab4f8"/>
<path d="M990 48 L996 54 L999 63 L996 63 L990 56 L987 51Z" fill="#8ab4f8"/>
<path d="M1075 26 L1079 34 L1078 46 L1075 46 L1074 35Z" fill="#8ab4f8"/>
<path d="M870 196 L878 190 L889 186 L890 188 L880 193 L872 199Z" fill="#8ab4f8"/>
<path d="M858 226 L868 222 L877 221 L877 223 L868 225 L859 230Z" fill="#8ab4f8"/>
<path d="M806 311 L814 309 L822 306 L822 308 L814 312Z" fill="#8ab4f8"/>
<path d="M788 325 L796 322 L806 321 L806 323 L797 325Z" fill="#8ab4f8"/>
<ellipse cx="1085" cy="111" rx="7.5" ry="4.5" fill="#8ab4f8" transform="rotate(-40 1085 111)"/>
<ellipse cx="1235" cy="467" rx="7" ry="8" fill="#8ab4f8" transform="rotate(10 1235 467)"/>
<ellipse cx="1221" cy="417" rx="4" ry="4" fill="#8ab4f8" transform="rotate(0 1221 417)"/>
<ellipse cx="1130" cy="471" rx="6" ry="3.5" fill="#8ab4f8" transform="rotate(0 1130 471)"/>
<ellipse cx="1128" cy="224" rx="5" ry="3.5" fill="#8ab4f8" transform="rotate(-30 1128 224)"/>
<ellipse cx="1144" cy="239" rx="6.5" ry="4.5" fill="#8ab4f8" transform="rotate(-30 1144 239)"/>
<ellipse cx="1133" cy="262" rx="4" ry="6" fill="#8ab4f8" transform="rotate(-20 1133 262)"/>
<ellipse cx="1150" cy="272" rx="3.5" ry="5" fill="#8ab4f8" transform="rotate(0 1150 272)"/>
<ellipse cx="1076" cy="276" rx="6" ry="3" fill="#8ab4f8" transform="rotate(-20 1076 276)"/>
<ellipse cx="1068" cy="340" rx="3" ry="8" fill="#8ab4f8" transform="rotate(15 1068 340)"/>
<ellipse cx="1088" cy="352" rx="4" ry="9" fill="#8ab4f8" transform="rotate(20 1088 352)"/>
<ellipse cx="1108" cy="330" rx="3" ry="7" fill="#8ab4f8" transform="rotate(-10 1108 330)"/>
<ellipse cx="1060" cy="233" rx="4" ry="2.5" fill="#8ab4f8" transform="rotate(0 1060 233)"/>
<ellipse cx="1190" cy="176" rx="6" ry="3" fill="#8ab4f8" transform="rotate(-30 1190 176)"/>
<ellipse cx="1172" cy="150" rx="3" ry="6" fill="#8ab4f8" transform="rotate(10 1172 150)"/>
<ellipse cx="1296" cy="352" rx="4" ry="2.5" fill="#8ab4f8" transform="rotate(0 1296 352)"/>
<ellipse cx="925" cy="420" rx="7" ry="2.5" fill="#8ab4f8" transform="rotate(-15 925 420)"/>
<ellipse cx="1393.6" cy="108.5" rx="13.5" ry="16.5" fill="#b5e0c0" transform="rotate(22 1393.6 108.5)"/>
<ellipse cx="965" cy="417" rx="6" ry="4" fill="#a6d9b4"/>
<path d="M921.5 498 L923 499 L913.5 525 L912 524 Z" fill="#a6d9b4"/>
<ellipse cx="574" cy="478" rx="5" ry="8" fill="#a6d9b4" transform="rotate(25 574 478)"/>
<ellipse cx="566" cy="498" rx="3" ry="6" fill="#a6d9b4"/>
<ellipse cx="629" cy="451" rx="5" ry="4.5" fill="#a6d9b4"/>
<ellipse cx="652" cy="413" rx="3" ry="10" fill="#a6d9b4" transform="rotate(12 652 413)"/>
<path d="M885 461 L891 461 L882 483 L879 483 Z" fill="#8ab4f8"/>
<path d="M1073 451 L1078 451 L1077 466 L1085 474 L1084 482 L1078 480 L1072 466 Z" fill="#8ab4f8"/></g>
<path d="M830 430 L845 420 L870 425 L900 420 L925 428 L940 436" fill="none" stroke="#f2d37c" stroke-width="1.1" stroke-linejoin="round"/>
<path d="M830 430 L838 455 L848 490 L860 520 L868 540" fill="none" stroke="#f2d37c" stroke-width="1.1" stroke-linejoin="round"/>
<path d="M848 490 L880 480 L900 470 L915 460 L935 440" fill="none" stroke="#f2d37c" stroke-width="1.1" stroke-linejoin="round"/>
<path d="M868 540 L895 520 L910 495 L915 470" fill="none" stroke="#f2d37c" stroke-width="1.1" stroke-linejoin="round"/>
<path d="M830 425 L825 400 L840 370 L850 340 L870 310 L880 290 L905 270" fill="none" stroke="#f2d37c" stroke-width="1.1" stroke-linejoin="round"/>
<path d="M750 415 L775 405 L800 400 L828 425" fill="none" stroke="#f2d37c" stroke-width="1.1" stroke-linejoin="round"/>
<path d="M760 460 L790 455 L815 440 L828 428" fill="none" stroke="#f2d37c" stroke-width="1.1" stroke-linejoin="round"/>
<path d="M770 474 L800 470 L820 450" fill="none" stroke="#f2d37c" stroke-width="1.1" stroke-linejoin="round"/>
<path d="M765 345 L800 330 L840 320 L870 310" fill="none" stroke="#f2d37c" stroke-width="1.1" stroke-linejoin="round"/>
<path d="M850 262 L870 240 L880 215 L890 185 L905 160 L925 140 L950 110 L965 95 L990 70 L1020 60 L1040 50 L1050 25" fill="none" stroke="#f2d37c" stroke-width="1.1" stroke-linejoin="round"/>
<path d="M905 270 L940 250 L975 245 L1000 235" fill="none" stroke="#f2d37c" stroke-width="1.1" stroke-linejoin="round"/>
<path d="M922 395 L925 370 L935 345 L950 325 L975 300 L985 275 L990 250 L1000 235 L1030 235 L1045 262" fill="none" stroke="#f2d37c" stroke-width="1.1" stroke-linejoin="round"/>
<path d="M950 110 L975 130 L985 160 L1000 180 L1005 210 L1000 235" fill="none" stroke="#f2d37c" stroke-width="1.1" stroke-linejoin="round"/>
<path d="M1040 50 L1035 90 L1045 130 L1035 170 L1045 204 L1032 235" fill="none" stroke="#f2d37c" stroke-width="1.1" stroke-linejoin="round"/>
<path d="M1045 204 L1065 190 L1075 160 L1085 130 L1075 100 L1090 70 L1100 62" fill="none" stroke="#f2d37c" stroke-width="1.1" stroke-linejoin="round"/>
<path d="M1046 267 L1025 300 L1000 330 L990 365 L995 400 L1010 418" fill="none" stroke="#f2d37c" stroke-width="1.1" stroke-linejoin="round"/>
<path d="M1046 267 L1050 300 L1055 340 L1050 380 L1040 415" fill="none" stroke="#f2d37c" stroke-width="1.1" stroke-linejoin="round"/>
<path d="M1040 415 L1060 408 L1085 406 L1110 418" fill="none" stroke="#f2d37c" stroke-width="1.1" stroke-linejoin="round"/>
<path d="M1075 285 L1090 260 L1100 230 L1095 200 L1075 160" fill="none" stroke="#f2d37c" stroke-width="1.1" stroke-linejoin="round"/>
<path d="M1075 285 L1080 320 L1090 350 L1085 380 L1060 408" fill="none" stroke="#f2d37c" stroke-width="1.1" stroke-linejoin="round"/>
<path d="M1157 108 L1160 140 L1150 170 L1148 200 L1160 240 L1165 280 L1172 320 L1170 345 L1150 370 L1140 400 L1110 420" fill="none" stroke="#f2d37c" stroke-width="1.1" stroke-linejoin="round"/>
<path d="M1117.5 424.4 L1132 449 L1135 460 L1155 472 L1172 486 L1186 503 L1206 517.5 L1218 529 L1223.6 539" fill="none" stroke="#f2d37c" stroke-width="1.1" stroke-linejoin="round"/>
<path d="M1135 460 L1152 477 L1169 494.6 L1183.5 509 L1200.7 520.4" fill="none" stroke="#f2d37c" stroke-width="1.1" stroke-linejoin="round"/>
<path d="M1223.6 539 L1243.7 514.7 L1258 494.6 L1263.8 466 L1260.9 451.6 L1255 443 L1240.8 428.7 L1229.4 414.3 L1226.5 400 L1222 380 L1210 360" fill="none" stroke="#f2d37c" stroke-width="1.1" stroke-linejoin="round"/>
<path d="M1255 443 L1275 423 L1286.7 400 L1295 380 L1290 350 L1275 325 L1266 300 L1266 280" fill="none" stroke="#f2d37c" stroke-width="1.1" stroke-linejoin="round"/>
<path d="M1223.6 539 L1249.4 530.4 L1275 526 L1298 527.6 L1316.8 524.7 L1329.7 531.9 L1358.4 533.3 L1387 530.4 L1424 531.9" fill="none" stroke="#f2d37c" stroke-width="1.1" stroke-linejoin="round"/>
<path d="M1223.6 539 L1200.7 529 L1172 526 L1137.6 523.3 L1109 523.3 L1086 520.4 L1057.3 514.7 L1028.7 509" fill="none" stroke="#f2d37c" stroke-width="1.1" stroke-linejoin="round"/>
<path d="M1117.5 424.4 L1111.8 440 L1106 463 L1091.7 480.3 L1083 497.5 L1077.4 514.7 L1070 535 L1060 548" fill="none" stroke="#f2d37c" stroke-width="1.1" stroke-linejoin="round"/>
<path d="M1117.5 424.4 L1094.6 431.5 L1071.7 438.7 L1037.3 438.7" fill="none" stroke="#f2d37c" stroke-width="1.1" stroke-linejoin="round"/>
<path d="M1034.4 438.7 L1031.5 457.3 L1028.7 480.3 L1025.8 507.5" fill="none" stroke="#f2d37c" stroke-width="1.1" stroke-linejoin="round"/>
<path d="M1037 438.7 L1054.5 457.3 L1063 474.5 L1074.5 486 L1091.7 480.3" fill="none" stroke="#f2d37c" stroke-width="1.1" stroke-linejoin="round"/>
<path d="M1025.8 507.5 L1048.7 514.7 L1071.7 517.5 L1086 520.4" fill="none" stroke="#f2d37c" stroke-width="1.1" stroke-linejoin="round"/>
<path d="M1000 408.6 L1017 407 L1037 415.8 L1057 413 L1080 411.5 L1097.5 414.3 L1117.5 424.4" fill="none" stroke="#f2d37c" stroke-width="1.1" stroke-linejoin="round"/>
<path d="M1117.5 424.4 L1137.6 423 L1152 414.3 L1160.6 400 L1165 380 L1170 360 L1170 345" fill="none" stroke="#f2d37c" stroke-width="1.1" stroke-linejoin="round"/>
<path d="M1025.8 507.5 L1015 525 L1005 548" fill="none" stroke="#f2d37c" stroke-width="1.1" stroke-linejoin="round"/>
<path d="M1025.8 507.5 L1040 530 L1060 548" fill="none" stroke="#f2d37c" stroke-width="1.1" stroke-linejoin="round"/>
<path d="M1223.6 539 L1215 549" fill="none" stroke="#f2d37c" stroke-width="1.1" stroke-linejoin="round"/>
<path d="M1223.6 539 L1240 549" fill="none" stroke="#f2d37c" stroke-width="1.1" stroke-linejoin="round"/>
<path d="M1086 520.4 L1095 535 L1110 548" fill="none" stroke="#f2d37c" stroke-width="1.1" stroke-linejoin="round"/>
<path d="M1137.6 523.3 L1150 540 L1165 549" fill="none" stroke="#f2d37c" stroke-width="1.1" stroke-linejoin="round"/>
<path d="M800 505 L810 520 L805 540 L815 548" fill="none" stroke="#f2d37c" stroke-width="1.1" stroke-linejoin="round"/>
<path d="M805 540 L835 545 L860 545" fill="none" stroke="#f2d37c" stroke-width="1.1" stroke-linejoin="round"/>
<path d="M610 548 L615 530 L625 528 L640 545" fill="none" stroke="#f2d37c" stroke-width="1.1" stroke-linejoin="round"/>
<path d="M615 530 L605 510 L600 490 L610 470" fill="none" stroke="#f2d37c" stroke-width="1.1" stroke-linejoin="round"/>
<path d="M1000 548 L1040 545 L1080 548" fill="none" stroke="#f2d37c" stroke-width="1.1" stroke-linejoin="round"/>
<path d="M838 460 L842 440 L850 425 L846 400 L850 370 L848 340 L858 310 L870 290 L873 265 L880 245 L890 225 L897 205 L905 185 L915 170 L928 160 L935 145 L945 130 L958 118 L968 103" fill="none" stroke="#7f8a85" stroke-width=".9"/>
<path d="M968 103 L985 100 L1000 125 L1020 128 L1035 118 L1045 90 L1055 75 L1075 70 L1090 68" fill="none" stroke="#7f8a85" stroke-width=".9"/>
<path d="M968 103 L985 120 L1005 140 L1018 165 L1022 200 L1025 232" fill="none" stroke="#7f8a85" stroke-width=".9"/>
<path d="M1090 68 L1100 95 L1110 110 L1100 135 L1110 160 L1120 190 L1112 220 L1125 255 L1120 290 L1135 320 L1125 350 L1110 380 L1095 400" fill="none" stroke="#7f8a85" stroke-width=".9"/>
<path d="M1081 439 L1078 460 L1085 485 L1075 500 L1050 492 L1030 485" fill="none" stroke="#7f8a85" stroke-width=".9"/>
<path d="M1085 485 L1090 520 L1070 535 L1040 530 L1000 528 L985 535" fill="none" stroke="#7f8a85" stroke-width=".9"/>
<path d="M1100 201 L1150 201" fill="none" stroke="#7d8f86" stroke-width=".8" stroke-dasharray="1.5 1.5"/>
<path d="M1424 200 L1395 215 L1390 235 L1395 250 L1410 260 L1412 280 L1395 290 L1385 282" fill="none" stroke="#7d8f86" stroke-width=".8" stroke-dasharray="1.5 1.5"/>
<path d="M1090 520 L1120 515 L1150 525" fill="none" stroke="#7d8f86" stroke-width=".8" stroke-dasharray="1.5 1.5"/>
<path d="M1200 440 L1215 460 L1205 480 L1230 495" fill="none" stroke="#7d8f86" stroke-width=".8" stroke-dasharray="1.5 1.5"/>
<path d="M1290 215 L1300 235 L1330 240 L1360 248 L1395 250" fill="none" stroke="#7d8f86" stroke-width=".8" stroke-dasharray="1.5 1.5"/>
<path d="M1350 330 L1370 350 L1365 390 L1385 410 L1375 450 L1400 470 L1395 500 L1424 510" fill="none" stroke="#7d8f86" stroke-width=".8" stroke-dasharray="1.5 1.5"/>
<path d="M1240 300 L1250 330 L1235 360 L1250 395 L1240 430" fill="none" stroke="#7d8f86" stroke-width=".8" stroke-dasharray="1.5 1.5"/>
<path d="M1340 528 L1346 526.5 L1352 523 L1358 528 L1368 522.5 L1376 527.5 L1386 522.5 L1394 527 L1406 522.5 L1412 527 L1425 523" fill="none" stroke="#8ab4f8" stroke-width="2.4" stroke-linejoin="round"/>
<path d="M829 415 C823 428 812 437 788 451 C762 466 742 486 728 511 C721 524 716 536 712.5 547" fill="none" stroke="#fb3b3f" stroke-width="4" stroke-linecap="butt"/>
<g transform="translate(839.6 402.4) rotate(-33.4) scale(-.452 .452) translate(-96.75 -68.25)"><use href="#plane" width="196" height="119"/></g>
<path d="M827 397.6 H847 M836.7 389 V408" stroke="#b80f14" stroke-width="2.6"/>
<circle cx="829.6" cy="415" r="8.1" fill="#70390d"/><circle cx="829.6" cy="415" r="5.4" fill="#fb0a20"/>
<g fill="#fff" stroke="#333" stroke-width=".8"><circle cx="936.9" cy="441.8" r="1.4"/><circle cx="1037.5" cy="417.3" r="1.4"/><circle cx="1035" cy="439.2" r="1.4"/><circle cx="1025.3" cy="507.3" r="1.4"/><circle cx="1111" cy="420.5" r="1.4"/><circle cx="1223" cy="538.5" r="1.4"/><circle cx="627" cy="533.5" r="1.4"/><circle cx="1316.8" cy="524.7" r="1.4"/><circle cx="1157" cy="113.5" r="1.4"/><circle cx="1049" cy="209.5" r="1.4"/><circle cx="949" cy="85" r="1.4"/></g>
</svg>
<div class="abs" style="left:88.5px;top:21.5px;width:37px;height:9px;background:rgba(255,255,255,.75);border-radius:2px"></div>
<div class="abs" style="left:7.0px;top:22.0px;width:200px;text-align:center;font-size:6.6px;line-height:7.9px;font-weight:normal;color:#151515;white-space:nowrap;text-shadow:0 0 1.2px #fff,0 0 1.2px #fff,0 0 1.6px #fff;-webkit-text-stroke:.15px currentColor;background:rgba(255,255,255,.0);">JAN MAYEN</div>
<div class="abs" style="left:175.0px;top:109.2px;width:200px;text-align:center;font-size:6.3px;line-height:7.6px;font-weight:normal;color:#3d6fd6;white-space:nowrap;">Europäisches</div>
<div class="abs" style="left:175.0px;top:116.2px;width:200px;text-align:center;font-size:6.3px;line-height:7.6px;font-weight:normal;color:#3d6fd6;white-space:nowrap;">Nordmeer</div>
<div class="abs" style="left:407.0px;top:76.6px;width:200px;text-align:center;font-size:5.6px;line-height:6.7px;font-weight:normal;color:#151515;white-space:nowrap;text-shadow:0 0 1.2px #fff,0 0 1.2px #fff,0 0 1.6px #fff;-webkit-text-stroke:.15px currentColor;">Tromsø</div>
<div class="abs" style="left:615.0px;top:97.4px;width:200px;text-align:center;font-size:6px;line-height:7.2px;font-weight:bold;color:#151515;white-space:nowrap;text-shadow:0 0 1.2px #fff,0 0 1.2px #fff,0 0 1.6px #fff;-webkit-text-stroke:.15px currentColor;">Murmansk</div>
<div class="abs" style="left:615.0px;top:104.4px;width:200px;text-align:center;font-size:6px;line-height:7.2px;font-weight:bold;color:#151515;white-space:nowrap;text-shadow:0 0 1.2px #fff,0 0 1.2px #fff,0 0 1.6px #fff;-webkit-text-stroke:.15px currentColor;">Мурманск</div>
<div class="abs" style="left:507.0px;top:200.4px;width:200px;text-align:center;font-size:6px;line-height:7.2px;font-weight:normal;color:#151515;white-space:nowrap;text-shadow:0 0 1.2px #fff,0 0 1.2px #fff,0 0 1.6px #fff;-webkit-text-stroke:.15px currentColor;">Rovaniemi</div>
<div class="abs" style="left:375.5px;top:327.6px;width:200px;text-align:center;font-size:9px;line-height:10.8px;font-weight:bold;color:#151515;white-space:nowrap;text-shadow:0 0 1.2px #fff,0 0 1.2px #fff,0 0 1.6px #fff;-webkit-text-stroke:.15px currentColor;">Schweden</div>
<div class="abs" style="left:267.5px;top:359.5px;width:200px;text-align:center;font-size:8.4px;line-height:10.1px;font-weight:bold;color:#151515;white-space:nowrap;text-shadow:0 0 1.2px #fff,0 0 1.2px #fff,0 0 1.6px #fff;-webkit-text-stroke:.15px currentColor;">Norwegen</div>
<div class="abs" style="left:515.0px;top:356.6px;width:200px;text-align:center;font-size:8.2px;line-height:9.8px;font-weight:bold;color:#151515;white-space:nowrap;text-shadow:0 0 1.2px #fff,0 0 1.2px #fff,0 0 1.6px #fff;-webkit-text-stroke:.15px currentColor;">Finnland</div>
<div class="abs" style="left:26.0px;top:351.8px;width:200px;text-align:center;font-size:7px;line-height:8.4px;font-weight:normal;color:#151515;white-space:nowrap;text-shadow:0 0 1.2px #fff,0 0 1.2px #fff,0 0 1.6px #fff;-webkit-text-stroke:.15px currentColor;">Färöer</div>
<div class="abs" style="left:395.0px;top:430.9px;width:200px;text-align:center;font-size:7.7px;line-height:9.2px;font-weight:normal;color:#151515;white-space:nowrap;text-shadow:0 0 1.2px #fff,0 0 1.2px #fff,0 0 1.6px #fff;-webkit-text-stroke:.15px currentColor;">Stockholm</div>
<div class="abs" style="left:495.5px;top:406.4px;width:200px;text-align:center;font-size:7.7px;line-height:9.2px;font-weight:normal;color:#151515;white-space:nowrap;text-shadow:0 0 1.2px #fff,0 0 1.2px #fff,0 0 1.6px #fff;-webkit-text-stroke:.15px currentColor;">Helsinki</div>
<div class="abs" style="left:492.5px;top:427.8px;width:200px;text-align:center;font-size:7.8px;line-height:9.4px;font-weight:normal;color:#151515;white-space:nowrap;text-shadow:0 0 1.2px #fff,0 0 1.2px #fff,0 0 1.6px #fff;-webkit-text-stroke:.15px currentColor;">Tallinn</div>
<div class="abs" style="left:575.0px;top:404.5px;width:200px;text-align:center;font-size:7.5px;line-height:9.0px;font-weight:normal;color:#151515;white-space:nowrap;text-shadow:0 0 1.2px #fff,0 0 1.2px #fff,0 0 1.6px #fff;-webkit-text-stroke:.15px currentColor;">St. Petersburg</div>
<div class="abs" style="left:575.0px;top:413.8px;width:200px;text-align:center;font-size:7px;line-height:8.4px;font-weight:bold;color:#151515;white-space:nowrap;text-shadow:0 0 1.2px #fff,0 0 1.2px #fff,0 0 1.6px #fff;-webkit-text-stroke:.15px currentColor;">Санкт-Петербург</div>
<div class="abs" style="left:508.5px;top:454.6px;width:200px;text-align:center;font-size:9px;line-height:10.8px;font-weight:bold;color:#151515;white-space:nowrap;text-shadow:0 0 1.2px #fff,0 0 1.2px #fff,0 0 1.6px #fff;-webkit-text-stroke:.15px currentColor;">Estland</div>
<div class="abs" style="left:511.0px;top:501.0px;width:200px;text-align:center;font-size:9.2px;line-height:11.0px;font-weight:bold;color:#151515;white-space:nowrap;text-shadow:0 0 1.2px #fff,0 0 1.2px #fff,0 0 1.6px #fff;-webkit-text-stroke:.15px currentColor;">Lettland</div>
<div class="abs" style="left:471.5px;top:502.8px;width:200px;text-align:center;font-size:7.8px;line-height:9.4px;font-weight:normal;color:#151515;white-space:nowrap;text-shadow:0 0 1.2px #fff,0 0 1.2px #fff,0 0 1.6px #fff;-webkit-text-stroke:.15px currentColor;">Riga</div>
<div class="abs" style="left:681.0px;top:520.8px;width:200px;text-align:center;font-size:7px;line-height:8.4px;font-weight:bold;color:#151515;white-space:nowrap;text-shadow:0 0 1.2px #fff,0 0 1.2px #fff,0 0 1.6px #fff;-webkit-text-stroke:.15px currentColor;">Moskau</div>
<div class="abs" style="left:681.0px;top:529.3px;width:200px;text-align:center;font-size:7px;line-height:8.4px;font-weight:bold;color:#151515;white-space:nowrap;text-shadow:0 0 1.2px #fff,0 0 1.2px #fff,0 0 1.6px #fff;-webkit-text-stroke:.15px currentColor;">Москва</div>
<div class="abs" style="left:775.0px;top:488.3px;width:200px;text-align:center;font-size:7px;line-height:8.4px;font-weight:bold;color:#151515;white-space:nowrap;text-shadow:0 0 1.2px #fff,0 0 1.2px #fff,0 0 1.6px #fff;-webkit-text-stroke:.15px currentColor;">Nischni</div>
<div class="abs" style="left:775.0px;top:496.8px;width:200px;text-align:center;font-size:7px;line-height:8.4px;font-weight:bold;color:#151515;white-space:nowrap;text-shadow:0 0 1.2px #fff,0 0 1.2px #fff,0 0 1.6px #fff;-webkit-text-stroke:.15px currentColor;">Nowgorod</div>
<div class="abs" style="left:775.0px;top:505.8px;width:200px;text-align:center;font-size:7px;line-height:8.4px;font-weight:bold;color:#151515;white-space:nowrap;text-shadow:0 0 1.2px #fff,0 0 1.2px #fff,0 0 1.6px #fff;-webkit-text-stroke:.15px currentColor;">Нижний</div>
<div class="abs" style="left:775.0px;top:514.8px;width:200px;text-align:center;font-size:7px;line-height:8.4px;font-weight:bold;color:#151515;white-space:nowrap;text-shadow:0 0 1.2px #fff,0 0 1.2px #fff,0 0 1.6px #fff;-webkit-text-stroke:.15px currentColor;">Новгород</div>
<div class="abs" style="left:83.0px;top:523.6px;width:200px;text-align:center;font-size:7.4px;line-height:8.9px;font-weight:normal;color:#151515;white-space:nowrap;text-shadow:0 0 1.2px #fff,0 0 1.2px #fff,0 0 1.6px #fff;-webkit-text-stroke:.15px currentColor;">Edinburgh</div>
<div class="abs" style="left:277.0px;top:538.0px;width:200px;text-align:center;font-size:8.4px;line-height:10.1px;font-weight:bold;color:#151515;white-space:nowrap;text-shadow:0 0 1.2px #fff,0 0 1.2px #fff,0 0 1.6px #fff;-webkit-text-stroke:.15px currentColor;">Dänemark</div>
<div class="abs" style="left:479.0px;top:544.0px;width:200px;text-align:center;font-size:8.4px;line-height:10.1px;font-weight:bold;color:#151515;white-space:nowrap;text-shadow:0 0 1.2px #fff,0 0 1.2px #fff,0 0 1.6px #fff;-webkit-text-stroke:.15px currentColor;">Litauen</div>
<div class="abs" style="left:421.0px;top:461.9px;width:200px;text-align:center;font-size:6px;line-height:7.2px;font-weight:normal;color:#3d6fd6;white-space:nowrap;">Ostsee</div>
<div class="abs" style="left:180.0px;top:515.4px;width:200px;text-align:center;font-size:6px;line-height:7.2px;font-weight:normal;color:#3d6fd6;white-space:nowrap;">Nordsee</div>
<div class="abs" style="left:476px;top:334px;width:80px;text-align:center;font-size:5.6px;color:#3d6fd6;transform:rotate(-78deg);white-space:nowrap">Bottnischer Meerbusen</div>
<div class="abs" style="left:403px;top:405.6px;font-size:14.5px;line-height:17px;color:#000">Oslo</div>
<div class="abs" style="left:211px;top:530px;font-size:14.6px;line-height:17px;color:#000">Frankfurt</div>
<div class="abs" style="left:473px;top:525px;font-size:10.6px;font-weight:bold;letter-spacing:-.2px;line-height:14px;text-shadow:0 0 1px #fff,0 0 1.5px #fff"><span style="color:#4285f4">G</span><span style="color:#ea4335">o</span><span style="color:#fbbc05">o</span><span style="color:#4285f4">g</span><span style="color:#34a853">l</span><span style="color:#ea4335">e</span></div>
<div class="abs" style="left:564px;top:543.5px;width:419px;height:7.5px;background:rgba(255,255,255,.72)"></div>
<div class="abs" style="left:565.6px;top:543px;font-size:6px;line-height:7.5px;color:#2a2a2a;white-space:pre;letter-spacing:-0.208px">Kartendaten © 2023 Google,GeoBasis-DE/BKG (©2009)</div>
<div class="abs" style="left:714.5px;top:543px;font-size:6px;line-height:7.5px;color:#2a2a2a;white-space:pre;letter-spacing:-0.169px">Deutschland</div>
<div class="abs" style="left:755.0px;top:543px;font-size:6px;line-height:7.5px;color:#2a2a2a;white-space:pre;letter-spacing:-0.216px">Bedingungen</div>
<div class="abs" style="left:796.7px;top:543px;font-size:6px;line-height:7.5px;color:#2a2a2a;white-space:pre;letter-spacing:-0.096px">Datenschutz</div>
<div class="abs" style="left:836.8px;top:543px;font-size:6px;line-height:7.5px;color:#2a2a2a;white-space:pre;letter-spacing:-0.250px">Feedback geben</div>
<div class="abs" style="left:887.0px;top:543px;font-size:6px;line-height:7.5px;color:#2a2a2a;white-space:pre;letter-spacing:-0.181px">200 km</div>
<div class="abs" style="left:907.4px;top:545.5px;width:33px;height:3.5px;border:1.2px solid #222;border-top:none"></div>
<div class="abs" style="left:946px;top:545.5px;width:37px;height:3.5px;border:1.2px solid #222;border-top:none;border-right:none"></div>
<div class="abs" style="left:941px;top:543px;font-size:5px;line-height:7px;color:#2a2a2a">m</div>
<div class="abs" style="left:55px;top:358px;width:197px;height:43.5px;background:rgba(26,26,28,.5);border:1.5px solid #c9a80c"><div class="abs" style="left:42.5px;top:0;width:1px;height:100%;background:rgba(201,168,12,.35)"></div><div class="abs" style="left:150px;top:0;width:1px;height:100%;background:rgba(201,168,12,.35)"></div><svg class="abs" style="left:10.5px;top:10px" width="22" height="22" viewBox="-13 -13 26 26"><circle r="3.2" fill="#d6d6d6"/><g fill="none" stroke="#d6d6d6" stroke-width="1.7"><path d="M-4 -7.5 L0 -11 L4 -7.5"/><path d="M-4 7.5 L0 11 L4 7.5"/><path d="M-7.5 -4 L-11 0 L-7.5 4"/><path d="M7.5 -4 L11 0 L7.5 4"/></g></svg><div class="abs" style="left:43px;top:11.5px;width:107px;text-align:center;font-size:13.5px;line-height:18px;letter-spacing:0.309px;text-indent:0.309px;color:#c6c6c6;white-space:nowrap">Position</div><svg class="abs" style="left:161px;top:12px" width="24" height="18" viewBox="0 0 24 18"><circle cx="3" cy="14" r="2.3" fill="#d6d6d6"/><path d="M7 7.5 C12 3.5 18 5 21 11.5" fill="none" stroke="#d6d6d6" stroke-width="2"/><path d="M4.5 8.8 L11 3.2 L11.6 10.8 Z" fill="#d6d6d6"/></svg></div>
<div class="abs" style="left:281px;top:358px;width:197px;height:43.5px;background:rgba(26,26,28,.5);border:1.5px solid #c9a80c"><div class="abs" style="left:42.5px;top:0;width:1px;height:100%;background:rgba(201,168,12,.35)"></div><div class="abs" style="left:150px;top:0;width:1px;height:100%;background:rgba(201,168,12,.35)"></div><svg class="abs" style="left:10.5px;top:10px" width="22" height="22" viewBox="-13 -13 26 26"><circle r="3.2" fill="#d6d6d6"/><g fill="none" stroke="#d6d6d6" stroke-width="1.7"><path d="M-4 -7.5 L0 -11 L4 -7.5"/><path d="M-4 7.5 L0 11 L4 7.5"/><path d="M-7.5 -4 L-11 0 L-7.5 4"/><path d="M7.5 -4 L11 0 L7.5 4"/></g></svg><div class="abs" style="left:43px;top:11.5px;width:107px;text-align:center;font-size:13.5px;line-height:18px;letter-spacing:-0.254px;text-indent:-0.254px;color:#c6c6c6;white-space:nowrap">Zoom</div><svg class="abs" style="left:161px;top:12px" width="24" height="18" viewBox="0 0 24 18"><circle cx="3" cy="14" r="2.3" fill="#d6d6d6"/><path d="M7 7.5 C12 3.5 18 5 21 11.5" fill="none" stroke="#d6d6d6" stroke-width="2"/><path d="M4.5 8.8 L11 3.2 L11.6 10.8 Z" fill="#d6d6d6"/></svg></div>
<div class="abs" style="left:507px;top:358px;width:197px;height:43.5px;background:rgba(26,26,28,.5);border:1.5px solid #c9a80c"><div class="abs" style="left:42.5px;top:0;width:1px;height:100%;background:rgba(201,168,12,.35)"></div><div class="abs" style="left:150px;top:0;width:1px;height:100%;background:rgba(201,168,12,.35)"></div><svg class="abs" style="left:10.5px;top:10px" width="22" height="22" viewBox="-13 -13 26 26"><circle r="3.2" fill="#d6d6d6"/><g fill="none" stroke="#d6d6d6" stroke-width="1.7"><path d="M-4 -7.5 L0 -11 L4 -7.5"/><path d="M-4 7.5 L0 11 L4 7.5"/><path d="M-7.5 -4 L-11 0 L-7.5 4"/><path d="M7.5 -4 L11 0 L7.5 4"/></g></svg><div class="abs" style="left:43px;top:11.5px;width:107px;text-align:center;font-size:13.5px;line-height:18px;letter-spacing:0.370px;text-indent:0.370px;color:#c6c6c6;white-space:nowrap">X/Y–Rotation</div><svg class="abs" style="left:161px;top:12px" width="24" height="18" viewBox="0 0 24 18"><circle cx="3" cy="14" r="2.3" fill="#d6d6d6"/><path d="M7 7.5 C12 3.5 18 5 21 11.5" fill="none" stroke="#d6d6d6" stroke-width="2"/><path d="M4.5 8.8 L11 3.2 L11.6 10.8 Z" fill="#d6d6d6"/></svg></div>
<div class="abs" style="left:733px;top:358px;width:197px;height:43.5px;background:rgba(26,26,28,.5);border:1.5px solid #c9a80c"><div class="abs" style="left:42.5px;top:0;width:1px;height:100%;background:rgba(201,168,12,.35)"></div><div class="abs" style="left:150px;top:0;width:1px;height:100%;background:rgba(201,168,12,.35)"></div><svg class="abs" style="left:10.5px;top:10px" width="22" height="22" viewBox="-13 -13 26 26"><circle r="3.2" fill="#d6d6d6"/><g fill="none" stroke="#d6d6d6" stroke-width="1.7"><path d="M-4 -7.5 L0 -11 L4 -7.5"/><path d="M-4 7.5 L0 11 L4 7.5"/><path d="M-7.5 -4 L-11 0 L-7.5 4"/><path d="M7.5 -4 L11 0 L7.5 4"/></g></svg><div class="abs" style="left:43px;top:11.5px;width:107px;text-align:center;font-size:13.5px;line-height:18px;letter-spacing:0.145px;text-indent:0.145px;color:#c6c6c6;white-space:nowrap">Z–Rotation</div><svg class="abs" style="left:161px;top:12px" width="24" height="18" viewBox="0 0 24 18"><circle cx="3" cy="14" r="2.3" fill="#d6d6d6"/><path d="M7 7.5 C12 3.5 18 5 21 11.5" fill="none" stroke="#d6d6d6" stroke-width="2"/><path d="M4.5 8.8 L11 3.2 L11.6 10.8 Z" fill="#d6d6d6"/></svg></div>
</div>
<svg width="0" height="0" style="position:absolute"><defs>
<linearGradient id="fus" x1="0" y1="0" x2="0" y2="1"><stop offset="0" stop-color="#d2d2d6"/><stop offset=".55" stop-color="#b9b9be"/><stop offset="1" stop-color="#8d8d93"/></linearGradient>
<linearGradient id="busw" x1="0" y1="0" x2="0" y2="1"><stop offset="0" stop-color="#7a76a6"/><stop offset="1" stop-color="#47447a"/></linearGradient>
<symbol id="plane" viewBox="0 0 196 119">
<path d="M152.8 60.2 L179.9 31.8 L188.6 31.1 L182.8 61.5 Z" fill="#2e3c9e"/>
<path d="M176 36 L186 34 L184.5 42 L170 44Z" fill="#3a49ad" opacity=".7"/>
<text x="161.5" y="59" font-family="Liberation Sans" font-style="italic" font-weight="bold" font-size="9.5" fill="#eef0fa" transform="skewX(-12)" style="transform-origin:161px 59px" textLength="21">SAS</text>
<path d="M167.7 65.6 L192.7 63.7 L192.2 66.2 L174.4 69.8 Z" fill="#85858b"/>
<path d="M2 72.3 C3.5 69 5.5 67 8.1 65.6 C13 63 18 61.8 24.3 61.2 L81 60.4 L152.8 59.9 C168 60 180 61.5 189.3 64.2 L192.7 65.6 C186 68.3 177 70.3 169 71.7 L135.2 77 C120 78.8 108 79.6 94.7 79.8 L40.6 79 C30 78.8 20 78.2 13.5 77 C7 75.6 3 74.2 2 72.3 Z" fill="url(#fus)"/>
<path d="M12.8 66 L18.5 64.6 L18.9 67 L13 67.7Z" fill="#1d2026"/>
<path d="M36.5 66.9 H144.7" stroke="#66696f" stroke-width="1.5" stroke-dasharray="1.4 1.7"/>
<rect x="25.7" y="62" width="5" height="10.3" rx=".8" fill="none" stroke="#8e8e94" stroke-width=".8"/><rect x="151.5" y="63" width="5" height="9.3" rx=".8" fill="none" stroke="#8e8e94" stroke-width=".8"/>
<path d="M117.6 68.3 L75.7 71.7 L79.8 74.6 L86.5 79 L94.7 79.4 L102.8 75.2 Z" fill="#6f6f75"/>
<path d="M117.6 68.3 L75.7 71.7 L79.8 74.6 L113 70Z" fill="#8b8b91"/>
<path d="M119 69.6 L123.7 65.3 L123.2 69.4 Z" fill="#2e3c9e"/>
<path d="M89.3 80.2 L94.7 80 L93 84.5 L90.8 84.5Z" fill="#7a7a80"/>
<rect x="59" y="75.7" width="27.5" height="9.3" rx="4" fill="#98989e"/>
<rect x="60.4" y="75.5" width="14.6" height="9.8" rx="1.6" fill="#e2362f"/>
<rect x="58.8" y="75.8" width="2.4" height="9.2" rx="1" fill="#b9b9bf"/>
</symbol>
<symbol id="bus" viewBox="0 0 196 119">
<rect x="63.5" y="33.5" width="60" height="5" rx="2" fill="#cdced2"/><rect x="134" y="33.5" width="27" height="5" rx="2" fill="#cdced2"/>
<path d="M7.5 62 C8.5 49 16 39.5 32 37.8 L184 37.6 Q189.5 37.6 189.5 43 L189.5 78 Q189.5 83 184 83 L12 83 Q7 83 7 78 Z" fill="#e2e2e5"/>
<path d="M31.8 38.6 L183.4 38.6 L183.4 56 L37 56 C33.5 56.3 31.5 60 27.5 64 C24.5 67 19.5 68.8 15 68.8 L14.9 56 C16 46.5 22 40.3 31.8 38.6 Z" fill="#15141d"/>
<path d="M42 41.2 L182.2 41.2 L181.5 54.6 L37.5 54.6 C39.5 50 41 45 42 41.2Z" fill="url(#busw)"/>
<path d="M43 42 L182 42 L181.8 46 L41.5 46.5Z" fill="#8984b3" opacity=".75"/>
<path d="M16.6 67 C17 54.5 21.5 45.5 30.3 42 L31 42 L31 58.5 C29 63.5 22.5 67 16.6 67Z" fill="#726f9b"/>
<path d="M17.5 57 C19 50 23 45 30.5 42.5 L30.8 50 C26 52 21 55 17.5 57Z" fill="#9a98bd" opacity=".8"/>
<path d="M57.8 41V55M89 41V55M120.3 41V55M152.6 41V55" stroke="#15141d" stroke-width="1.3"/>
<path d="M50 55 l3 -7 M72 55 l3 -7 M82 55 l3 -7 M103 55 l3 -7 M113 55 l3 -7 M134 55 l3 -7 M145 55 l3 -7 M165 55 l3 -7 M176 55 l3 -7" stroke="#2a2843" stroke-width=".9"/>
<path d="M7.8 67 C8.3 57 10.3 49 15 43.5 L16.2 44.5 C13 50 12.2 58 12.3 68Z" fill="#8d8bb1"/>
<path d="M13.3 46.5 C16 39.6 24 36.9 36 36.1 L35 38.4 C25 39.2 18 42.2 15.2 47.8Z" fill="#0c0c11"/>
<path d="M7 77 H189.5 V78 Q189.5 83 184 83 H12 Q7 83 7 78Z" fill="#c4c4c9"/>
<path d="M31.8 56.5V82M102 56.5V82M119.7 56.5V82M58 70V82M73 70V82M88 70V82" stroke="#c6c6cb" stroke-width=".8"/>
<rect x="171" y="71.4" width="11" height="6.2" fill="#8a8a8f"/><rect x="27" y="73" width="3" height="1.6" fill="#333"/><rect x="110" y="73" width="3" height="1.6" fill="#333"/>
<rect x="7.8" y="71" width="2.6" height="2" fill="#e8892a"/><rect x="188" y="70" width="1.6" height="6" fill="#c8302f"/>
<circle cx="48.7" cy="80.2" r="7.4" fill="#1b1b1e"/><circle cx="48.7" cy="80.2" r="4" fill="#b4b4b9"/><circle cx="48.7" cy="80.2" r="1.6" fill="#6d6d72"/>
<circle cx="129.8" cy="80.2" r="7.4" fill="#1b1b1e"/><circle cx="129.8" cy="80.2" r="4" fill="#77777c"/><circle cx="129.8" cy="80.2" r="1.6" fill="#3d3d42"/>
<circle cx="149.4" cy="80.2" r="7.4" fill="#1b1b1e"/><circle cx="149.4" cy="80.2" r="4" fill="#b4b4b9"/><circle cx="149.4" cy="80.2" r="1.6" fill="#6d6d72"/>
</symbol>
</defs></svg><div class="abs" style="left:0px;top:815px;width:1479px;height:35px;background:#323232;border-top:1px solid #555;"></div>
<div class="txt" style="left:459px;top:825px;font-size:13px;letter-spacing:0.62px;color:#e6e6e6;-webkit-text-stroke:.3px #e6e6e6">Bilddauer</div>
<div class="abs" style="left:526px;top:820px;width:126px;height:24px;background:#2c2c2c;border:1px solid #4f4f4f;"></div>
<div class="abs" style="left:527px;top:821px;width:27px;height:22px;background:#505050;"></div>
<div class="txt" style="left:547px;top:825px;font-size:12.5px;letter-spacing:0.78px;color:#f2f2f2;-webkit-text-stroke:.45px #f2f2f2">6.5 Sekunden</div>
<div class="txt" style="left:682px;top:825px;font-size:13px;letter-spacing:0;color:#e6e6e6;transform-origin:0 50%;transform:scaleX(.87);-webkit-text-stroke:.3px #e6e6e6">Überblendung</div>
<div class="abs" style="left:761px;top:820px;width:126px;height:24px;background:#2c2c2c;border:1px solid #4f4f4f;"></div>
<div class="abs" style="left:762px;top:821px;width:19px;height:22px;background:#505050;"></div>
<div class="txt" style="left:782px;top:825px;font-size:12.5px;letter-spacing:0.78px;color:#f2f2f2;-webkit-text-stroke:.45px #f2f2f2">1.5 Sekunden</div>
<div class="abs" style="left:912px;top:820px;width:37px;height:25px;background:#2f2f2f;border:1px solid #525252;border-radius:2px;"></div>
<svg class="abs" style="left:917.5px;top:822.6px" width="26" height="19.5" viewBox="0 0 26 19" preserveAspectRatio="none"><path d="M7.5 2 H1.7 V17 H24.3 V2 H18.5 M1.7 2 L24.3 17 M1.7 17 L24.3 2" fill="none" stroke="#e6e6e6" stroke-width="2.5" stroke-linejoin="miter"/></svg>
<div class="abs" style="left:974px;top:820px;width:169px;height:25px;background:#2f2f2f;border:1px solid #525252;border-radius:2px;"></div>
<div class="abs" style="left:998px;top:821px;width:1px;height:23px;background:#454545;"></div>
<div class="abs" style="left:1022px;top:821px;width:1px;height:23px;background:#454545;"></div>
<div class="abs" style="left:1046px;top:821px;width:1px;height:23px;background:#454545;"></div>
<div class="abs" style="left:1070px;top:821px;width:1px;height:23px;background:#454545;"></div>
<div class="abs" style="left:1094px;top:821px;width:1px;height:23px;background:#454545;"></div>
<div class="abs" style="left:1118px;top:821px;width:1px;height:23px;background:#454545;"></div>
<svg class="abs" style="left:1002.5px;top:824px" width="16" height="16" viewBox="-8 -8 16 16"><path d="M0 -7 L1.8 -2.3 L6.8 -2.1 L2.9 1 L4.2 5.8 L0 3.1 L-4.2 5.8 L-2.9 1 L-6.8 -2.1 L-1.8 -2.3 Z" fill="#f0f0f0"/></svg>
<svg class="abs" style="left:1026.5px;top:824px" width="16" height="16" viewBox="-8 -8 16 16"><path d="M0 -7 L1.8 -2.3 L6.8 -2.1 L2.9 1 L4.2 5.8 L0 3.1 L-4.2 5.8 L-2.9 1 L-6.8 -2.1 L-1.8 -2.3 Z" fill="#f0f0f0"/></svg>
<svg class="abs" style="left:1050.5px;top:824px" width="16" height="16" viewBox="-8 -8 16 16"><path d="M0 -7 L1.8 -2.3 L6.8 -2.1 L2.9 1 L4.2 5.8 L0 3.1 L-4.2 5.8 L-2.9 1 L-6.8 -2.1 L-1.8 -2.3 Z" fill="#f0f0f0"/></svg>
<svg class="abs" style="left:1074.5px;top:824px" width="16" height="16" viewBox="-8 -8 16 16"><path d="M0 -7 L1.8 -2.3 L6.8 -2.1 L2.9 1 L4.2 5.8 L0 3.1 L-4.2 5.8 L-2.9 1 L-6.8 -2.1 L-1.8 -2.3 Z" fill="#f0f0f0"/></svg>
<svg class="abs" style="left:1098.5px;top:824px" width="16" height="16" viewBox="-8 -8 16 16"><path d="M0 -7 L1.8 -2.3 L6.8 -2.1 L2.9 1 L4.2 5.8 L0 3.1 L-4.2 5.8 L-2.9 1 L-6.8 -2.1 L-1.8 -2.3 Z" fill="#f0f0f0"/></svg>
<svg class="abs" style="left:977px;top:824px" width="19" height="15" viewBox="0 0 19 15"><circle cx="2.5" cy="11.5" r="1.8" fill="#e8e8e8"/><path d="M5 6.5 C9 3.5 14 4.5 16.5 10" fill="none" stroke="#e8e8e8" stroke-width="1.7"/><path d="M3.2 7.2 L8.6 3 L8.8 9.2 Z" fill="#e8e8e8"/></svg>
<svg class="abs" style="left:1121px;top:824px" width="20" height="17" viewBox="0 0 20 17"><path d="M1 8.5 C4 3.5 8 2.5 10 2.5 C12 2.5 16 3.5 19 8.5 C16 13 12 14 10 14 C8 14 4 13 1 8.5 Z" fill="none" stroke="#e8e8e8" stroke-width="1.5"/><circle cx="10" cy="8.3" r="3" fill="none" stroke="#e8e8e8" stroke-width="1.5"/><path d="M4.5 1.5 L16 16" stroke="#2f2f2f" stroke-width="3.5"/><path d="M4 1 L16.5 16.5" stroke="#e8e8e8" stroke-width="1.5"/></svg>
<div class="abs" style="left:1168px;top:820px;width:73px;height:25px;background:#2f2f2f;border:1px solid #525252;border-radius:2px;"></div>
<div class="abs" style="left:1192px;top:821px;width:24px;height:23px;background:#4a4a4a;"></div>
<div class="abs" style="left:1192px;top:821px;width:1px;height:23px;background:#454545;"></div>
<div class="abs" style="left:1216px;top:821px;width:1px;height:23px;background:#454545;"></div>
<svg class="abs" style="left:1170px;top:822.5px" width="20" height="20" viewBox="-10 -10 20 20"><path d="M0 -8.2 A8.2 8.2 0 1 0 8.2 0 L8.2 8.2 L0 8.2 A8.2 8.2 0 0 0 8.2 0" fill="#ececec" opacity="0"/><path d="M8.2 0 L8.2 8.2 L0 8.2 A8.2 8.2 0 0 0 8.2 0 Z" fill="#ececec"/><circle r="7.299999999999999" fill="#2f2f2f" stroke="#ececec" stroke-width="1.8"/><path d="M-4 0 H4" stroke="#ececec" stroke-width="1.8"/></svg>
<svg class="abs" style="left:1194px;top:822.5px" width="20" height="20" viewBox="-10 -10 20 20"><path d="M0 -8.2 A8.2 8.2 0 1 0 8.2 0 L8.2 8.2 L0 8.2 A8.2 8.2 0 0 0 8.2 0" fill="#b99f27" opacity="0"/><path d="M8.2 0 L8.2 8.2 L0 8.2 A8.2 8.2 0 0 0 8.2 0 Z" fill="#b99f27"/><circle r="7.299999999999999" fill="#4a4a4a" stroke="#b99f27" stroke-width="1.8"/><path d="M0 -4.6 L1.2 -1.5 L4.5 -1.4 L1.9 0.7 L2.8 3.8 L0 2 L-2.8 3.8 L-1.9 0.7 L-4.5 -1.4 L-1.2 -1.5 Z" fill="#b99f27"/></svg>
<svg class="abs" style="left:1218.5px;top:822.5px" width="20" height="20" viewBox="-10 -10 20 20"><path d="M0 -8.2 A8.2 8.2 0 1 0 8.2 0 L8.2 8.2 L0 8.2 A8.2 8.2 0 0 0 8.2 0" fill="#ececec" opacity="0"/><path d="M8.2 0 L8.2 8.2 L0 8.2 A8.2 8.2 0 0 0 8.2 0 Z" fill="#ececec"/><circle r="7.299999999999999" fill="#2f2f2f" stroke="#ececec" stroke-width="1.8"/><path d="M-4 0 H4 M0 -4 V4" stroke="#ececec" stroke-width="1.8"/></svg>
<div class="abs" style="left:0px;top:849.5px;width:1479px;height:57px;background:#1d1d1d;"></div>
<div class="abs" style="left:-14px;top:854.4px;width:73.5px;height:46px;background:#272727;"></div>
<div class="abs" style="left:66px;top:854.4px;width:73.5px;height:46px;background:#272727;"></div>
<div class="abs" style="left:146px;top:854.4px;width:73.5px;height:46px;background:#272727;"></div>
<div class="abs" style="left:226px;top:854.4px;width:73.5px;height:46px;background:#272727;"></div>
<div class="abs" style="left:306px;top:854.4px;width:73.5px;height:46px;background:#272727;"></div>
<div class="abs" style="left:386px;top:854.4px;width:73.5px;height:46px;background:#272727;"></div>
<div class="abs" style="left:466px;top:854.4px;width:73.5px;height:46px;background:#272727;"></div>
<div class="abs" style="left:546px;top:854.4px;width:73.5px;height:46px;background:#272727;"></div>
<div class="abs" style="left:626px;top:854.4px;width:73.5px;height:46px;background:#272727;"></div>
<div class="abs" style="left:706px;top:854.4px;width:73.5px;height:46px;background:#272727;"></div>
<div class="abs" style="left:786px;top:854.4px;width:73.5px;height:46px;background:#272727;"></div>
<div class="abs" style="left:866px;top:854.4px;width:73.5px;height:46px;background:#272727;"></div>
<div class="abs" style="left:946px;top:854.4px;width:73.5px;height:46px;background:#272727;"></div>
<div class="abs" style="left:1026px;top:854.4px;width:73.5px;height:46px;background:#272727;"></div>
<div class="abs" style="left:1106px;top:854.4px;width:73.5px;height:46px;background:#272727;"></div>
<div class="abs" style="left:1186px;top:854.4px;width:73.5px;height:46px;background:#272727;"></div>
<div class="abs" style="left:1266px;top:854.4px;width:73.5px;height:46px;background:#272727;"></div>
<div class="abs" style="left:1346px;top:854.4px;width:73.5px;height:46px;background:#272727;"></div>
<div class="abs" style="left:1426px;top:854.4px;width:73.5px;height:46px;background:#272727;"></div>
<div class="abs" style="left:1506px;top:854.4px;width:73.5px;height:46px;background:#272727;"></div>
<div class="abs" style="left:0px;top:905.7px;width:1479px;height:8.4px;background:#585858;"></div>
<div class="abs" style="left:0px;top:913px;width:1479px;height:12px;background:#1f1f1f;"></div>
<div class="abs" style="left:0px;top:925px;width:1479px;height:172px;background:#191919;"></div>
<div class="abs" style="left:0px;top:933px;width:69px;height:25px;background:#232323;"></div>
<div class="abs" style="left:0px;top:958px;width:69px;height:139px;background:#1b1b1b;"></div>
<div class="abs" style="left:57px;top:960px;width:1px;height:137px;background:#262626;"></div>
<div class="abs" style="left:58px;top:962px;width:6px;height:44px;background:#4c4c4c;border-radius:3px;"></div>
<div class="abs" style="left:0px;top:1021px;width:57px;height:20px;background:#0058d0;"></div>
<div class="txt" style="left:-2px;top:1045px;font-size:12.5px;letter-spacing:.1px;color:#f0f0f0;-webkit-text-stroke:.4px #f0f0f0;transform-origin:0 50%;transform:scaleX(.98)">–Bodö (1)</div>
<div class="txt" style="left:-5px;top:1085px;font-size:12.5px;letter-spacing:0;color:#f0f0f0;-webkit-text-stroke:.4px #f0f0f0;transform-origin:0 50%;transform:scaleX(.86)">welt–Fähr...</div>
<svg class="abs" style="left:-1.1999999999999993px;top:935px" width="20" height="20" viewBox="-10 -10 20 20"><path d="M0 -8 A8 8 0 1 0 8 0 L8 8 L0 8 A8 8 0 0 0 8 0" fill="#ad9424" opacity="0"/><path d="M8 0 L8 8 L0 8 A8 8 0 0 0 8 0 Z" fill="#ad9424"/><circle r="7.1" fill="#232323" stroke="#ad9424" stroke-width="1.8"/><path d="M0 -4.6 L1.2 -1.5 L4.5 -1.4 L1.9 0.7 L2.8 3.8 L0 2 L-2.8 3.8 L-1.9 0.7 L-4.5 -1.4 L-1.2 -1.5 Z" fill="#ad9424"/></svg>
<svg class="abs" style="left:23px;top:935px" width="20" height="20" viewBox="-10 -10 20 20"><path d="M0 -8 A8 8 0 1 0 8 0 L8 8 L0 8 A8 8 0 0 0 8 0" fill="#ececec" opacity="0"/><path d="M8 0 L8 8 L0 8 A8 8 0 0 0 8 0 Z" fill="#ececec"/><circle r="7.1" fill="#232323" stroke="#ececec" stroke-width="1.8"/><path d="M-4 0 H4 M0 -4 V4" stroke="#ececec" stroke-width="1.8"/></svg>
<svg class="abs" style="left:48px;top:936px" width="18" height="18" viewBox="0 0 18 18"><path d="M2 2h5v5h-5zM11 2h5v5h-5zM2 11h5v5h-5zM11 11h5v5h-5z" fill="none" stroke="#f6d90a" stroke-width="2"/></svg>
<div class="abs chkd" id="th0" style="left:79px;top:935px;width:196px;height:119px;overflow:hidden"><svg class="abs" style="left:0;top:0" width="196" height="119"><use href="#plane"/></svg><div class="abs" style="left:0;top:0;width:100%;height:100%;background:rgba(0,0,0,.04)"></div><div class="abs" style="left:75px;top:50px;width:46px;height:18px;background:rgba(78,78,78,.88);color:#f2f2f2;font-size:14px;line-height:18px;text-align:center;letter-spacing:.3px">1x TL</div><div class="abs" style="left:56.0px;top:101px;width:84px;height:18px;background:rgba(88,88,88,.78);color:#b4b4b4;font-size:12.8px;line-height:19px;text-align:center;letter-spacing:.5px;white-space:nowrap;overflow:hidden">SAS–A320–l</div></div>
<div class="abs" style="left:79px;top:1054.5px;width:196px;height:43px;background:#252525;"></div>
<div class="abs chkd" id="th1" style="left:279px;top:935px;width:196px;height:119px;overflow:hidden"><svg class="abs" style="left:0;top:0;transform:scaleX(-1)" width="196" height="119"><use href="#plane"/></svg><div class="abs" style="left:0;top:0;width:100%;height:100%;background:rgba(0,0,0,.04)"></div><div class="abs" style="left:75px;top:50px;width:46px;height:18px;background:rgba(78,78,78,.88);color:#f2f2f2;font-size:14px;line-height:18px;text-align:center;letter-spacing:.3px">1x TL</div><div class="abs" style="left:55.0px;top:101px;width:86px;height:18px;background:rgba(88,88,88,.78);color:#b4b4b4;font-size:12.8px;line-height:19px;text-align:center;letter-spacing:.5px;white-space:nowrap;overflow:hidden">SAS–A320–r</div></div>
<div class="abs" style="left:279px;top:1054.5px;width:196px;height:43px;background:#252525;"></div>
<div class="abs chkd" id="th2" style="left:479px;top:935px;width:196px;height:119px;overflow:hidden"><svg class="abs" style="left:0;top:0" width="196" height="119" viewBox="0 0 196 119">
<path d="M109.5 49 V40.5 H125.5 V49 M117 49 V41 M113 44 H124" fill="none" stroke="#d2d2d2" stroke-width="1"/>
<path d="M44.6 53.4 L47.5 44.6 L59.5 45 L67.6 53.4 Z" fill="#141416"/><circle cx="53.8" cy="49.4" r="3.3" fill="#d02a30"/><path d="M52.4 47.6v3.6M55.2 47.6v3.6M52.4 49.4h2.8" stroke="#fff" stroke-width=".9"/>
<path d="M80 54.8 L82 51.2 H130 L132 54.8Z" fill="#d9dade"/><path d="M83 52.8H129" stroke="#3a3c44" stroke-width="1.2"/>
<path d="M12 66 L16.5 54.6 H150 L153 57.5 H164 L166 66 Z" fill="#e3e4e6"/>
<path d="M19 56.6 H150" stroke="#5f7fae" stroke-width="1.5" stroke-dasharray="2 1"/>
<path d="M16 60.5 H163 M15 64 H164" stroke="#6b6e75" stroke-width="1.3" stroke-dasharray="1.4 1.3"/>
<rect x="63.5" y="59.2" width="15" height="4" rx="1.5" fill="#e5891c"/><rect x="80" y="59.2" width="14" height="4" rx="1.5" fill="#d98a2a"/>
<rect x="153" y="58" width="11" height="2.6" fill="#1d1e22"/>
<path d="M4.7 66 H166 L189.3 71 L189 72 H4.7Z" fill="#ececec"/>
<path d="M6 68.8 H156" stroke="#24262b" stroke-width="2.2" stroke-dasharray="1.7 1.2"/>
<path d="M4.7 71.3 H189.3 L187 75 H5Z" fill="#c9262c"/>
<path d="M4.7 74.3 H188 L177 83.6 H7 Z" fill="#0e0f11"/>
</svg><div class="abs" style="left:0;top:0;width:100%;height:100%;background:rgba(0,0,0,.04)"></div><div class="abs" style="left:75px;top:50px;width:46px;height:18px;background:rgba(78,78,78,.88);color:#f2f2f2;font-size:14px;line-height:18px;text-align:center;letter-spacing:.3px">1x TL</div><div class="abs" style="left:6.0px;top:101px;width:184px;height:18px;background:rgba(88,88,88,.78);color:#b4b4b4;font-size:12.8px;line-height:19px;text-align:center;letter-spacing:.5px;white-space:nowrap;overflow:hidden">Profil–Kong–Harald–m–deck</div></div>
<div class="abs" style="left:479px;top:1054.5px;width:196px;height:43px;background:#252525;"></div>
<div class="abs chkd" id="th3" style="left:679px;top:935px;width:196px;height:119px;overflow:hidden"><svg class="abs" style="left:0;top:0" width="196" height="119" viewBox="0 0 196 119">
<defs><filter id="tb"><feGaussianBlur stdDeviation=".8"/></filter></defs>
<g filter="url(#tb)">
<path d="M40 79 H174 L176 84 H44Z" fill="#1b1716"/>
<path d="M120 38 H141" stroke="#5a5552" stroke-width="2"/>
<path d="M7 66 C7 54 12 45 22 42.5 L40 41.6 L160 41.6 C172 42 180 46 183.5 54 L184.5 74 C183 78 178 79.5 170 79.6 L30 80 C18 80 10 78 7.5 72 Z" fill="#c3cbc3"/>
<path d="M22 43 V79 M30 42.5 V79.5 M165 42.5 V79 M172 44 V78" stroke="#a9b2aa" stroke-width="1.2"/>
<rect x="44.6" y="44.3" width="104" height="29.7" fill="#aebbb2"/>
<rect x="44.6" y="44.3" width="104" height="4.8" fill="#2a2524"/>
<path d="M46 46.7 H148" stroke="#8c3a38" stroke-width="1.2" stroke-dasharray="1.2 1.6"/>
<rect x="44.6" y="49" width="104" height="6.2" fill="#2fa5a2"/>
<rect x="44.6" y="55.2" width="104" height="4" fill="#8fc4c1"/>
<rect x="44.6" y="58.6" width="76" height="1.8" fill="#e6ece6"/>
<rect x="44.6" y="60.4" width="76" height="4.4" fill="#3c9f9c"/>
<rect x="44.6" y="64.8" width="104" height="9.2" fill="#b4c0b6"/>
<path d="M120 52 L124 50 L130 53 L136 51 L142 53 L148.6 52 V71 L140 70 L134 72 L128 68 L122 70 L118 64 Z" fill="#1d2224"/>
<rect x="19" y="55" width="2.4" height="4" fill="#2a2a2a"/><rect x="171.5" y="52" width="2" height="14" fill="#4b4f4c"/>
</g></svg><div class="abs" style="left:0;top:0;width:100%;height:100%;background:rgba(0,0,0,.04)"></div><div class="abs" style="left:75px;top:50px;width:46px;height:18px;background:rgba(78,78,78,.88);color:#f2f2f2;font-size:14px;line-height:18px;text-align:center;letter-spacing:.3px">1x TL</div><div class="abs" style="left:29.0px;top:101px;width:138px;height:18px;background:rgba(88,88,88,.78);color:#b4b4b4;font-size:12.8px;line-height:19px;text-align:center;letter-spacing:.5px;white-space:nowrap;overflow:hidden">Bergensbanen_–l–lok</div></div>
<div class="abs" style="left:679px;top:1054.5px;width:196px;height:43px;background:#252525;"></div>
<div class="abs chk" id="th4" style="left:881px;top:935px;width:194px;height:119px;overflow:hidden"><svg class="abs" style="left:0;top:0" width="194" height="119" viewBox="0 0 194 119">
<defs><filter id="tb2"><feGaussianBlur stdDeviation=".5"/></filter></defs>
<g filter="url(#tb2)"><path d="M2 56 C3 50 8 48 14 48 L70 47.5 C76 48 78 52 78 58 L78 64 C77 67 74 68 70 68 L12 68.5 C6 68 2 65 2 61 Z" fill="#d3d7d0"/>
<rect x="17" y="50" width="46" height="9" fill="#2f8a90"/><rect x="45" y="50" width="18" height="9" fill="#1d2a2e"/>
<path d="M14 68.5 H70" stroke="#333" stroke-width="1.6"/>
<rect x="79" y="50.5" width="112" height="14" rx="2" fill="#1c5560"/>
<path d="M82 55 H188" stroke="#9fc6c8" stroke-width="2.2" stroke-dasharray="5 3"/>
<path d="M80 65 H190" stroke="#222" stroke-width="1.8"/><path d="M79 50.5 H191" stroke="#e8e8e8" stroke-width="1"/></g></svg><div class="abs" style="left:0;top:101px;width:194px;height:18px;background:rgba(125,125,125,.85);color:#f4f4f4;font-size:12.5px;line-height:19px;text-align:center;letter-spacing:.42px;white-space:nowrap;overflow:hidden;text-indent:-2px">Bergensbanen_–l–mit Anhänger</div></div>
<div class="abs" style="left:881px;top:1054.5px;width:194px;height:43px;background:#252525;"></div>
<div class="abs chk" id="th5" style="left:1081px;top:935px;width:195px;height:119px;overflow:hidden"><svg class="abs" style="left:0;top:0" width="196" height="119"><use href="#bus"/></svg><div class="abs" style="left:76.5px;top:101px;width:43px;height:18px;background:rgba(120,120,120,.8);color:#f0f0f0;font-size:12.8px;line-height:19px;text-align:center;letter-spacing:.5px;white-space:nowrap;overflow:hidden">bus–l</div></div>
<div class="abs" style="left:1081px;top:1054.5px;width:195px;height:43px;background:#252525;"></div>
<div class="abs chkd" id="th6" style="left:1281px;top:935px;width:195px;height:119px;overflow:hidden"><svg class="abs" style="left:0;top:0;transform:scaleX(-1)" width="196" height="119"><use href="#bus"/></svg><div class="abs" style="left:0;top:0;width:100%;height:100%;background:rgba(0,0,0,.04)"></div><div class="abs" style="left:75px;top:50px;width:46px;height:18px;background:rgba(78,78,78,.88);color:#f2f2f2;font-size:14px;line-height:18px;text-align:center;letter-spacing:.3px">1x TL</div><div class="abs" style="left:76.0px;top:101px;width:44px;height:18px;background:rgba(88,88,88,.78);color:#b4b4b4;font-size:12.8px;line-height:19px;text-align:center;letter-spacing:.5px;white-space:nowrap;overflow:hidden">bus–r</div></div>
<div class="abs" style="left:1281px;top:1054.5px;width:195px;height:43px;background:#252525;"></div>
</div></body></html>
